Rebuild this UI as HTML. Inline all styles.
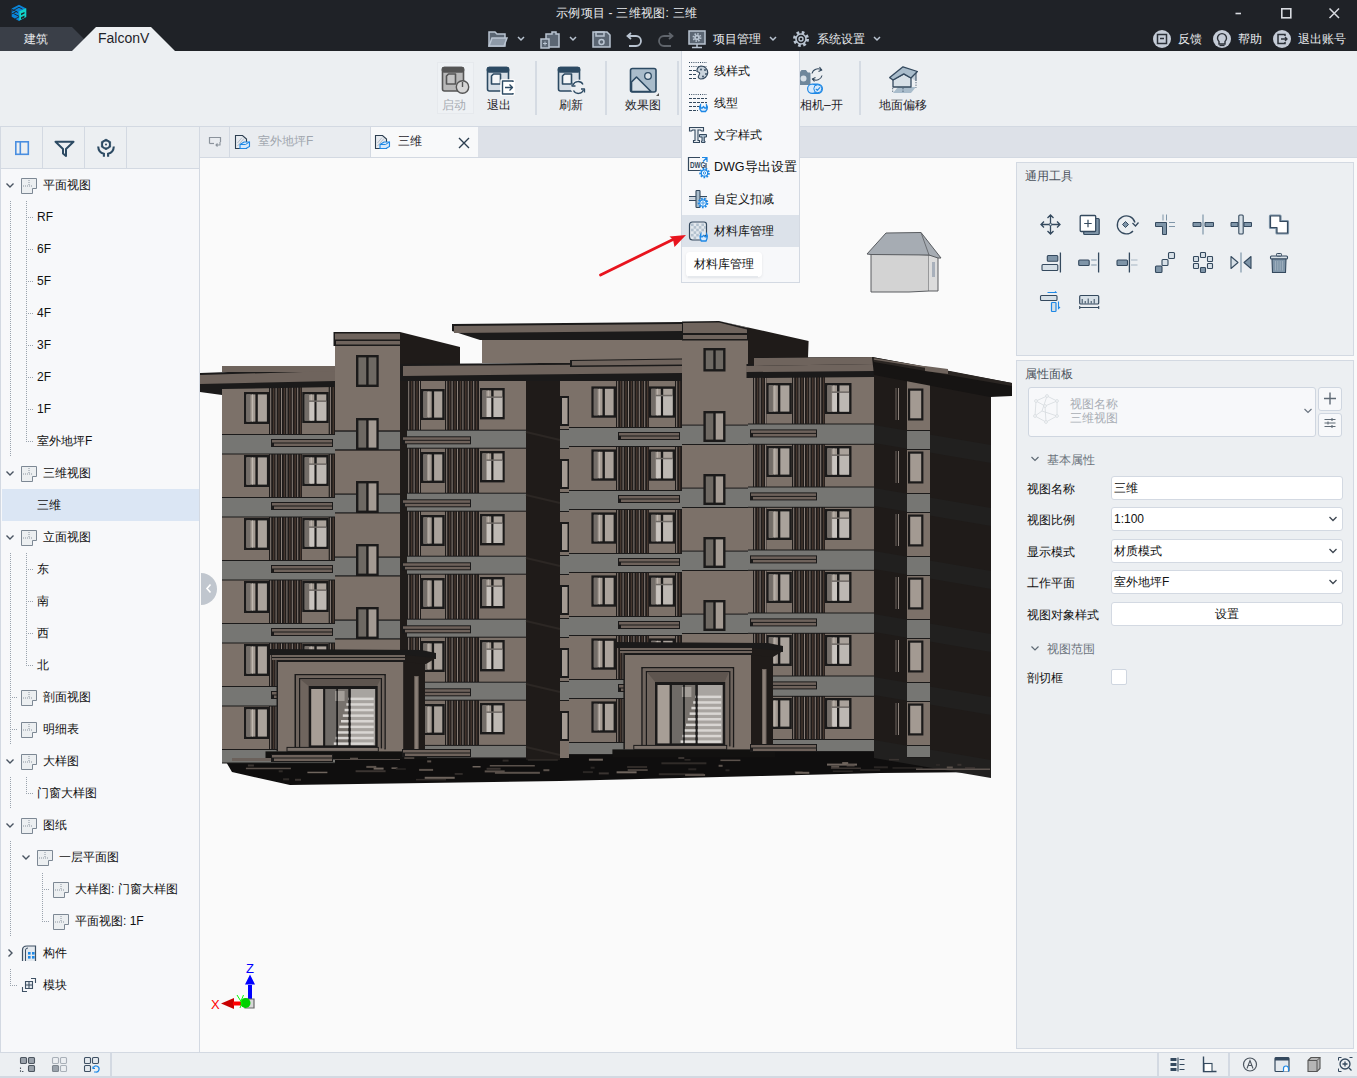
<!DOCTYPE html>
<html><head><meta charset="utf-8">
<style>
*{box-sizing:border-box;margin:0;padding:0}
html,body{width:1357px;height:1078px;overflow:hidden;background:#fafafa;font-family:"Liberation Sans",sans-serif;font-size:12px;color:#111}
.a{position:absolute}
#title{left:0;top:0;width:1357px;height:51px;background:#1f2227}
.wt{color:#e8eaed;white-space:nowrap}
#ribbon{left:0;top:51px;width:1357px;height:75px;background:#eceff2}
.rb{position:absolute;text-align:center;white-space:nowrap;color:#1f2329}
.sep{position:absolute;top:10px;width:2px;height:54px;background:#d5dbe3}
#left{left:0;top:126px;width:200px;height:927px;background:#f7f8fa;border:1px solid #d3d9e2;border-right:1px solid #d3d9e2}
#lhead{left:0;top:0;width:198px;height:42px;background:#eceff2;border-bottom:1px solid #d3d9e2}
.tr{position:absolute;height:32px;line-height:32px;white-space:nowrap}
#tabs{left:200px;top:126px;width:1157px;height:31px;background:#dfe3ea}
#view{left:200px;top:158px;width:1157px;height:894px;background:#fafafa}
#status{left:0;top:1052px;width:1357px;height:26px;background:#eceff2;border-top:1px solid #d3d9e2}
.panel{position:absolute;background:#eceff2;border:1px solid #d3d9e2}
.lbl{position:absolute;white-space:nowrap}
.inp{position:absolute;left:1111px;width:232px;height:24px;background:#fff;border:1px solid #d3d9e2;border-radius:3px;padding-left:2px;line-height:22px}
</style></head><body>
<!-- TITLE BAR -->
<div id="title" class="a">
<svg class="a" style="left:0;top:0" width="30" height="24">
<path d="M19 4.7 L26.2 8.6 V16.8 L19 20.9 L11.7 16.8 V8.6Z" fill="#0a84d8"/>
<path d="M11.7 11.3 L19 7.3 L22.5 9.2 M11.7 14 L17 11.2 M15 19 L19.5 16.6 M11.7 9.2 L18 12.5 M13.5 13.5 L19 16.3" stroke="#1f2227" stroke-width="0.9" fill="none"/>
<path d="M19.3 11.2 L26.2 8.2 V16.9 L19.3 20.6Z" fill="#12d3c8"/>
<path d="M21 13.6 L24.5 11.9 V13.6 L21 15.3Z M21 17.2 L24.5 15.4 V17.4 L21 19.3Z" fill="#1f2227"/>
</svg>
<div class="a wt" style="left:556px;top:5px;font-size:12px;letter-spacing:0.25px">示例项目 - 三维视图: 三维</div>
<svg class="a" style="left:1230px;top:4px" width="120" height="20">
<path d="M5.5 9.5 H11" stroke="#d8dbe0" stroke-width="1.6"/>
<rect x="51.8" y="4.8" width="9" height="9" stroke="#d8dbe0" stroke-width="1.6" fill="none"/>
<path d="M99.5 4.5 L109 14 M109 4.5 L99.5 14" stroke="#d8dbe0" stroke-width="1.5"/>
</svg>
<!-- tabs -->
<svg class="a" style="left:0;top:27px" width="200" height="24">
<path d="M0 0 H72 L96 24 H0Z" fill="#3a3f48"/>
<path d="M72 24 L96 0 H151 L175 24Z" fill="#eceff2"/>
</svg>
<div class="a" style="left:24px;top:31px;color:#e6e8eb;font-size:12px">建筑</div>
<div class="a" style="left:98px;top:30px;color:#1f2329;font-size:14px">FalconV</div>
<!-- quick toolbar -->
<svg class="a" style="left:480px;top:27px" width="420" height="24" fill="none" stroke="#b9c4d1" stroke-width="1.5">
<path d="M9 5 H15 L17 7 H25 V19 H9Z" fill="#5b6673" stroke="#b9c4d1"/>
<path d="M9 19 L12 11 H27 L24 19Z" fill="#8e9aa8" stroke="#b9c4d1"/>
<path d="M38 10 L41 13 L44 10" />
<path d="M66 7 H72 V5 H76 V7 H79 V20 H66Z" fill="#5b6673"/>
<rect x="61" y="12" width="8" height="9" fill="#5b6673"/>
<path d="M63 16.5 H67 M65 14.5 V18.5" stroke-width="1"/>
<path d="M90 10 L93 13 L96 10" />
<path d="M113 5 H127 L130 8 V20 H113Z" fill="#5b6673"/>
<rect x="116" y="5" width="8" height="4"/>
<circle cx="121.5" cy="15" r="2.5"/>
<path d="M148 9 H156 A5 5 0 0 1 156 19 H149" stroke-width="1.8"/>
<path d="M151 6 L147.5 9 L151 12" stroke-width="1.8"/>
<path d="M192 9 H184 A5 5 0 0 0 184 19 H191" stroke="#5f646b" stroke-width="1.8"/>
<path d="M189 6 L192.5 9 L189 12" stroke="#5f646b" stroke-width="1.8"/>
<rect x="209" y="4" width="16" height="13" fill="#5b6673"/>
<circle cx="217" cy="10.5" r="3.6" fill="none" stroke="#b9c4d1" stroke-width="1.8" stroke-dasharray="1.5 1.3"/>
<circle cx="217" cy="10.5" r="2.8" fill="#b9c4d1" stroke="none"/>
<circle cx="217" cy="10.5" r="1.1" fill="#5b6673" stroke="none"/>
<path d="M217 17 V20 M212 20.5 H222"/>
<path d="M290 10 L293 13 L296 10" />
<circle cx="321" cy="12" r="6.5" fill="none" stroke-width="3" stroke-dasharray="2.6 2.5"/>
<circle cx="321" cy="12" r="5" fill="none" stroke-width="1.6"/>
<circle cx="321" cy="12" r="2" fill="none" stroke-width="1.4"/>
<path d="M394 10 L397 13 L400 10" />
</svg>
<div class="a wt" style="left:713px;top:31px">项目管理</div>
<div class="a wt" style="left:817px;top:31px">系统设置</div>
<!-- right -->
<svg class="a" style="left:1150px;top:27px" width="207" height="24">
<circle cx="12" cy="12" r="9" fill="#c5ccd7"/>
<rect x="7.5" y="7.5" width="9" height="9" fill="none" stroke="#2b3038" stroke-width="1.5"/>
<path d="M10 11.5 H14" stroke="#2b3038" stroke-width="1.5"/>
<circle cx="72" cy="12" r="9" fill="#c5ccd7"/>
<path d="M69 17 V14.5 A4.5 4.5 0 1 1 75 14.5 V17Z" fill="none" stroke="#2b3038" stroke-width="1.4"/>
<path d="M69.5 18.5 H74.5" stroke="#2b3038" stroke-width="1.2"/>
<circle cx="132" cy="12" r="9" fill="#c5ccd7"/>
<path d="M135 9 V7.5 H128 V16.5 H135 V15" fill="none" stroke="#2b3038" stroke-width="1.5"/>
<path d="M131 12 H137 M135 10 L137 12 L135 14" fill="none" stroke="#2b3038" stroke-width="1.3"/>
</svg>
<div class="a wt" style="left:1178px;top:31px">反馈</div>
<div class="a wt" style="left:1238px;top:31px">帮助</div>
<div class="a wt" style="left:1298px;top:31px">退出账号</div>
</div>
<!-- RIBBON -->
<div id="ribbon" class="a">
<div class="a" style="left:437px;top:11px;width:37px;height:52px;background:#eef1f4;border:1px solid #e6e9ed"></div>
<svg class="a" style="left:0;top:0" width="940" height="75">
<g stroke-width="1.6" stroke-linejoin="round">
<!-- qidong -->
<rect x="442.5" y="16.5" width="21" height="23.5" rx="2" fill="#b8b8b8" stroke="#555"/>
<rect x="442.5" y="16.5" width="21" height="4.5" rx="1.5" fill="#555" stroke="#555"/>
<path d="M446.5 25 L448.5 23 H455.5 V33 H446.5Z" fill="#c4c4c4" stroke="#555"/>
<circle cx="462.5" cy="36" r="6.2" fill="#d6d6d6" stroke="#555" stroke-width="1.4"/>
<path d="M462.5 31 V36" stroke="#555" stroke-width="1.4"/>
<!-- tuichu -->
<rect x="487.5" y="16.5" width="21" height="23.5" rx="2" fill="#d6dee6" stroke="#2c4a63"/>
<rect x="487.5" y="16.5" width="21" height="4.5" rx="1.5" fill="#2c4a63" stroke="#2c4a63"/>
<path d="M491.5 25 L493.5 23 H500.5 V33 H491.5Z" fill="#f4f6f8" stroke="#2c4a63"/>
<rect x="501.5" y="29.5" width="12" height="14" fill="#fff" stroke="#fff" stroke-width="2.5"/>
<path d="M513 31 V30 H502.5 V43 H513 V42" fill="none" stroke="#2c4a63" stroke-width="1.4"/>
<path d="M505 36.5 H512.5 M509.5 33.5 L512.5 36.5 L509.5 39.5" fill="none" stroke="#2c4a63" stroke-width="1.3"/>
<!-- shuaxin -->
<rect x="558.5" y="16.5" width="21" height="23.5" rx="2" fill="#d6dee6" stroke="#2c4a63"/>
<rect x="558.5" y="16.5" width="21" height="4.5" rx="1.5" fill="#2c4a63" stroke="#2c4a63"/>
<path d="M562.5 25 L564.5 23 H571.5 V33 H562.5Z" fill="#f4f6f8" stroke="#2c4a63"/>
<circle cx="578.3" cy="36.4" r="6.8" fill="#eceff2" stroke="#eceff2" stroke-width="2"/>
<path d="M573 34 A5.5 5.5 0 0 1 583 33.5 M583.5 39 A5.5 5.5 0 0 1 573.5 39.5" fill="none" stroke="#2c4a63" stroke-width="1.3"/>
<path d="M572 31.5 V35 H575.5 M584.5 41.5 V38 H581" fill="none" stroke="#2c4a63" stroke-width="1.3"/>
<!-- xiaoguotu -->
<rect x="630.5" y="17.5" width="25.5" height="23.5" rx="2" fill="#a9bccb" stroke="#2c4a63"/>
<path d="M631.5 31 L636.5 26 L651 40.5 H631.5Z" fill="#d7e0e7" stroke="#2c4a63"/>
<circle cx="648" cy="25" r="3.3" fill="#d7e0e7" stroke="#2c4a63" stroke-width="1.3"/>
<path d="M659 42 V45 H656Z" fill="#555" stroke="none"/>
<!-- camera -->
<path d="M797 22 H800 L801.5 19.5 H806 L807.5 22 H810 V33.5 H797Z" fill="#6f879b" stroke="#6f879b" stroke-width="1"/>
<circle cx="803.5" cy="27.5" r="3" fill="#d7e0e7"/>
<path d="M812 22.5 A6 6 0 0 1 821.5 19 M822 24.5 A6 6 0 0 1 812.5 28" fill="none" stroke="#34495e" stroke-width="1.1"/>
<path d="M819.5 16 L821.8 19 L818.5 20.5 M814.5 30.5 L812.3 28 L815.5 26.5" fill="none" stroke="#34495e" stroke-width="1.1"/>
<rect x="807" y="32.5" width="16" height="10.5" rx="5.25" fill="#1e88e5"/>
<circle cx="812.2" cy="37.75" r="4" fill="#d7e9fb"/>
<circle cx="817.8" cy="37.75" r="4" fill="#d7e9fb" stroke="#1e88e5" stroke-width="1"/>
<path d="M815.8 37.8 L817.3 39.3 L820 36.3" fill="none" stroke="#1e88e5" stroke-width="1.1"/>
<!-- dimian -->
<path d="M893 36.5 L911 36.5 L916 30.5 L898 30.5Z" fill="#a9bccb" stroke="none" transform="translate(0,5.5)"/>
<path d="M893 29 L903.8 23 L911 27 V36 H893Z" fill="#d7e0e7" stroke="#34495e" stroke-width="1.3"/>
<path d="M911 27 L916 21.5 V30" fill="#c4d0da" stroke="#34495e" stroke-width="1"/>
<path d="M889.7 26.6 L903 15.8 L917.4 20.5 L911 27 L903.8 22.9 L893 29Z" fill="#a9bccb" stroke="#34495e" stroke-width="1.3"/>
<path d="M892.7 37 V42 M903 37 V42 M916 31 V37" stroke="#34495e" stroke-width="0.8" stroke-dasharray="1.3 1.3"/>
</g>
</svg>
<div class="sep" style="left:534.5px"></div>
<div class="sep" style="left:605px"></div>
<div class="sep" style="left:677px"></div>
<div class="sep" style="left:859px"></div>
<div class="rb" style="left:442px;top:46px;color:#a6abb2">启动</div>
<div class="rb" style="left:487px;top:46px">退出</div>
<div class="rb" style="left:559px;top:46px">刷新</div>
<div class="rb" style="left:625px;top:46px">效果图</div>
<div class="rb" style="left:800px;top:46px">相机–开</div>
<div class="rb" style="left:879px;top:46px">地面偏移</div>
</div>
<!-- LEFT PANEL -->
<div class="a" style="left:0;top:126px;width:200px;height:927px;background:#f7f8fa;border:1px solid #d3d9e2"></div>
<div class="a" style="left:1px;top:127px;width:198px;height:42px;background:#eceff2;border-bottom:1px solid #d3d9e2"></div>
<div class="a" style="left:42px;top:127px;width:1px;height:42px;background:#d3d9e2"></div>
<div class="a" style="left:84px;top:127px;width:1px;height:42px;background:#d3d9e2"></div>
<div class="a" style="left:126px;top:127px;width:1px;height:42px;background:#d3d9e2"></div>
<svg class="a" style="left:0;top:127px" width="140" height="41">
<rect x="15.8" y="14.8" width="12.5" height="12.5" fill="none" stroke="#4a8ee0" stroke-width="1.6"/>
<path d="M20.3 15 V27" stroke="#4a8ee0" stroke-width="1.6"/>
<path d="M55.5 14.8 H73.5 L66 22 V29 L63 26.5 V22Z" fill="none" stroke="#2c4a63" stroke-width="2" stroke-linejoin="round"/>
<path d="M106.00 12.10 L110.59 14.75 L110.59 20.05 L106.00 22.70 L101.41 20.05 L101.41 14.75Z" fill="#2c4a63" stroke="#2c4a63" stroke-width="0.8" stroke-linejoin="round"/>
<circle cx="106" cy="17.400000000000006" r="3" fill="#eceff2"/>
<circle cx="106" cy="17.400000000000006" r="1" fill="#2c4a63"/>
<path d="M98.2 19.5 Q98.5 25.5 103.9 26.8 V29.8 M113.8 19.5 Q113.5 25.5 108.1 26.8 V29.8" fill="none" stroke="#2c4a63" stroke-width="2.1"/>
</svg>
<div class="a" style="left:0;top:0"><svg class="a" style="left:0;top:0" width="200" height="1052"><path d="M10.5 201 V233" stroke="#9aa3ad" stroke-width="1" stroke-dasharray="1 1"/><path d="M10.5 233 V265" stroke="#9aa3ad" stroke-width="1" stroke-dasharray="1 1"/><path d="M10.5 265 V297" stroke="#9aa3ad" stroke-width="1" stroke-dasharray="1 1"/><path d="M10.5 297 V329" stroke="#9aa3ad" stroke-width="1" stroke-dasharray="1 1"/><path d="M10.5 329 V361" stroke="#9aa3ad" stroke-width="1" stroke-dasharray="1 1"/><path d="M10.5 361 V393" stroke="#9aa3ad" stroke-width="1" stroke-dasharray="1 1"/><path d="M10.5 393 V425" stroke="#9aa3ad" stroke-width="1" stroke-dasharray="1 1"/><path d="M10.5 425 V457" stroke="#9aa3ad" stroke-width="1" stroke-dasharray="1 1"/><path d="M10.5 553 V585" stroke="#9aa3ad" stroke-width="1" stroke-dasharray="1 1"/><path d="M10.5 585 V617" stroke="#9aa3ad" stroke-width="1" stroke-dasharray="1 1"/><path d="M10.5 617 V649" stroke="#9aa3ad" stroke-width="1" stroke-dasharray="1 1"/><path d="M10.5 649 V681" stroke="#9aa3ad" stroke-width="1" stroke-dasharray="1 1"/><path d="M10.5 681 V713" stroke="#9aa3ad" stroke-width="1" stroke-dasharray="1 1"/><path d="M10 697.5 H18" stroke="#9aa3ad" stroke-width="1" stroke-dasharray="1 1"/><path d="M10.5 713 V745" stroke="#9aa3ad" stroke-width="1" stroke-dasharray="1 1"/><path d="M10 729.5 H18" stroke="#9aa3ad" stroke-width="1" stroke-dasharray="1 1"/><path d="M10.5 777 V809" stroke="#9aa3ad" stroke-width="1" stroke-dasharray="1 1"/><path d="M10.5 841 V873" stroke="#9aa3ad" stroke-width="1" stroke-dasharray="1 1"/><path d="M10.5 873 V905" stroke="#9aa3ad" stroke-width="1" stroke-dasharray="1 1"/><path d="M10.5 905 V937" stroke="#9aa3ad" stroke-width="1" stroke-dasharray="1 1"/><path d="M10.5 969 V985" stroke="#9aa3ad" stroke-width="1" stroke-dasharray="1 1"/><path d="M10 985.5 H18" stroke="#9aa3ad" stroke-width="1" stroke-dasharray="1 1"/><path d="M26.5 201 V233" stroke="#9aa3ad" stroke-width="1" stroke-dasharray="1 1"/><path d="M26 217.5 H34" stroke="#9aa3ad" stroke-width="1" stroke-dasharray="1 1"/><path d="M26.5 233 V265" stroke="#9aa3ad" stroke-width="1" stroke-dasharray="1 1"/><path d="M26 249.5 H34" stroke="#9aa3ad" stroke-width="1" stroke-dasharray="1 1"/><path d="M26.5 265 V297" stroke="#9aa3ad" stroke-width="1" stroke-dasharray="1 1"/><path d="M26 281.5 H34" stroke="#9aa3ad" stroke-width="1" stroke-dasharray="1 1"/><path d="M26.5 297 V329" stroke="#9aa3ad" stroke-width="1" stroke-dasharray="1 1"/><path d="M26 313.5 H34" stroke="#9aa3ad" stroke-width="1" stroke-dasharray="1 1"/><path d="M26.5 329 V361" stroke="#9aa3ad" stroke-width="1" stroke-dasharray="1 1"/><path d="M26 345.5 H34" stroke="#9aa3ad" stroke-width="1" stroke-dasharray="1 1"/><path d="M26.5 361 V393" stroke="#9aa3ad" stroke-width="1" stroke-dasharray="1 1"/><path d="M26 377.5 H34" stroke="#9aa3ad" stroke-width="1" stroke-dasharray="1 1"/><path d="M26.5 393 V425" stroke="#9aa3ad" stroke-width="1" stroke-dasharray="1 1"/><path d="M26 409.5 H34" stroke="#9aa3ad" stroke-width="1" stroke-dasharray="1 1"/><path d="M26.5 425 V441" stroke="#9aa3ad" stroke-width="1" stroke-dasharray="1 1"/><path d="M26 441.5 H34" stroke="#9aa3ad" stroke-width="1" stroke-dasharray="1 1"/><path d="M26.5 553 V585" stroke="#9aa3ad" stroke-width="1" stroke-dasharray="1 1"/><path d="M26 569.5 H34" stroke="#9aa3ad" stroke-width="1" stroke-dasharray="1 1"/><path d="M26.5 585 V617" stroke="#9aa3ad" stroke-width="1" stroke-dasharray="1 1"/><path d="M26 601.5 H34" stroke="#9aa3ad" stroke-width="1" stroke-dasharray="1 1"/><path d="M26.5 617 V649" stroke="#9aa3ad" stroke-width="1" stroke-dasharray="1 1"/><path d="M26 633.5 H34" stroke="#9aa3ad" stroke-width="1" stroke-dasharray="1 1"/><path d="M26.5 649 V665" stroke="#9aa3ad" stroke-width="1" stroke-dasharray="1 1"/><path d="M26 665.5 H34" stroke="#9aa3ad" stroke-width="1" stroke-dasharray="1 1"/><path d="M26.5 777 V793" stroke="#9aa3ad" stroke-width="1" stroke-dasharray="1 1"/><path d="M26 793.5 H34" stroke="#9aa3ad" stroke-width="1" stroke-dasharray="1 1"/><path d="M42.5 873 V905" stroke="#9aa3ad" stroke-width="1" stroke-dasharray="1 1"/><path d="M42 889.5 H50" stroke="#9aa3ad" stroke-width="1" stroke-dasharray="1 1"/><path d="M42.5 905 V921" stroke="#9aa3ad" stroke-width="1" stroke-dasharray="1 1"/><path d="M42 921.5 H50" stroke="#9aa3ad" stroke-width="1" stroke-dasharray="1 1"/><path d="M6.5 183.5 L10 187 L13.5 183.5" fill="none" stroke="#4a5562" stroke-width="1.4"/><path d="M21.5 178.5 H36.5 V188.5 H32.5 V193.5 H21.5Z" fill="#eceff1" stroke="#7d8894" stroke-width="1"/><path d="M23 186 H32 M29 180 V186" stroke="#8a949f" stroke-width="1" stroke-dasharray="1 1"/><path d="M6.5 471.5 L10 475 L13.5 471.5" fill="none" stroke="#4a5562" stroke-width="1.4"/><path d="M21.5 466.5 H36.5 V476.5 H32.5 V481.5 H21.5Z" fill="#eceff1" stroke="#7d8894" stroke-width="1"/><path d="M23 474 H32 M29 468 V474" stroke="#8a949f" stroke-width="1" stroke-dasharray="1 1"/><path d="M6.5 535.5 L10 539 L13.5 535.5" fill="none" stroke="#4a5562" stroke-width="1.4"/><path d="M21.5 530.5 H36.5 V540.5 H32.5 V545.5 H21.5Z" fill="#eceff1" stroke="#7d8894" stroke-width="1"/><path d="M23 538 H32 M29 532 V538" stroke="#8a949f" stroke-width="1" stroke-dasharray="1 1"/><path d="M21.5 690.5 H36.5 V700.5 H32.5 V705.5 H21.5Z" fill="#eceff1" stroke="#7d8894" stroke-width="1"/><path d="M23 698 H32 M29 692 V698" stroke="#8a949f" stroke-width="1" stroke-dasharray="1 1"/><path d="M21.5 722.5 H36.5 V732.5 H32.5 V737.5 H21.5Z" fill="#eceff1" stroke="#7d8894" stroke-width="1"/><path d="M23 730 H32 M29 724 V730" stroke="#8a949f" stroke-width="1" stroke-dasharray="1 1"/><path d="M6.5 759.5 L10 763 L13.5 759.5" fill="none" stroke="#4a5562" stroke-width="1.4"/><path d="M21.5 754.5 H36.5 V764.5 H32.5 V769.5 H21.5Z" fill="#eceff1" stroke="#7d8894" stroke-width="1"/><path d="M23 762 H32 M29 756 V762" stroke="#8a949f" stroke-width="1" stroke-dasharray="1 1"/><path d="M6.5 823.5 L10 827 L13.5 823.5" fill="none" stroke="#4a5562" stroke-width="1.4"/><path d="M21.5 818.5 H36.5 V828.5 H32.5 V833.5 H21.5Z" fill="#eceff1" stroke="#7d8894" stroke-width="1"/><path d="M23 826 H32 M29 820 V826" stroke="#8a949f" stroke-width="1" stroke-dasharray="1 1"/><path d="M22.5 855.5 L26 859 L29.5 855.5" fill="none" stroke="#4a5562" stroke-width="1.4"/><path d="M37.5 850.5 H52.5 V860.5 H48.5 V865.5 H37.5Z" fill="#eceff1" stroke="#7d8894" stroke-width="1"/><path d="M39 858 H48 M45 852 V858" stroke="#8a949f" stroke-width="1" stroke-dasharray="1 1"/><path d="M53.5 882.5 H68.5 V892.5 H64.5 V897.5 H53.5Z" fill="#eceff1" stroke="#7d8894" stroke-width="1"/><path d="M55 890 H64 M61 884 V890" stroke="#8a949f" stroke-width="1" stroke-dasharray="1 1"/><path d="M53.5 914.5 H68.5 V924.5 H64.5 V929.5 H53.5Z" fill="#eceff1" stroke="#7d8894" stroke-width="1"/><path d="M55 922 H64 M61 916 V922" stroke="#8a949f" stroke-width="1" stroke-dasharray="1 1"/><path d="M8.5 949.5 L12 953 L8.5 956.5" fill="none" stroke="#4a5562" stroke-width="1.4"/><path d="M22.5 961 V950 Q22.5 946 27 946 H35.5 V961" fill="#e4e9ee" stroke="#3f5164" stroke-width="1.2"/><path d="M25.5 961 V950 Q25.5 948 28 948" fill="none" stroke="#3f5164" stroke-width="1"/><rect x="28" y="952" width="2.6" height="2.6" fill="#1e88e5"/><rect x="28" y="956" width="2.6" height="2.6" fill="#1e88e5"/><rect x="32" y="952" width="2.6" height="2.6" fill="#1e88e5"/><rect x="32" y="956" width="2.6" height="2.6" fill="#1e88e5"/><path d="M25.5 981.5 H32.5 V988.5 H25.5Z M29 981.5 V988.5 M25.5 985 H32.5" fill="#e4e9ee" stroke="#3f5164" stroke-width="1.1"/><path d="M22.5 987 V991.5 H27 M31 978.5 H35.5 V983" fill="none" stroke="#3f5164" stroke-width="1.1"/></svg><div class="a" style="left:2px;top:489px;width:197px;height:32px;background:#dbe6f4"></div><div class="tr" style="left:43px;top:169px">平面视图</div><div class="tr" style="left:37px;top:201px">RF</div><div class="tr" style="left:37px;top:233px">6F</div><div class="tr" style="left:37px;top:265px">5F</div><div class="tr" style="left:37px;top:297px">4F</div><div class="tr" style="left:37px;top:329px">3F</div><div class="tr" style="left:37px;top:361px">2F</div><div class="tr" style="left:37px;top:393px">1F</div><div class="tr" style="left:37px;top:425px">室外地坪F</div><div class="tr" style="left:43px;top:457px">三维视图</div><div class="tr" style="left:37px;top:489px">三维</div><div class="tr" style="left:43px;top:521px">立面视图</div><div class="tr" style="left:37px;top:553px">东</div><div class="tr" style="left:37px;top:585px">南</div><div class="tr" style="left:37px;top:617px">西</div><div class="tr" style="left:37px;top:649px">北</div><div class="tr" style="left:43px;top:681px">剖面视图</div><div class="tr" style="left:43px;top:713px">明细表</div><div class="tr" style="left:43px;top:745px">大样图</div><div class="tr" style="left:37px;top:777px">门窗大样图</div><div class="tr" style="left:43px;top:809px">图纸</div><div class="tr" style="left:59px;top:841px">一层平面图</div><div class="tr" style="left:75px;top:873px">大样图: 门窗大样图</div><div class="tr" style="left:75px;top:905px">平面视图: 1F</div><div class="tr" style="left:43px;top:937px">构件</div><div class="tr" style="left:43px;top:969px">模块</div></div>
<!-- TABS -->
<div class="a" style="left:200px;top:126px;width:1157px;height:31px;background:#dde1e8;border-top:1px solid #d3d9e2"></div>
<div class="a" style="left:200px;top:127px;width:30px;height:30px;background:#e9ecf0;border-right:1px solid #d3d9e2"></div>
<div class="a" style="left:230px;top:127px;width:141px;height:30px;background:#e9ecf0;border-right:1px solid #d3d9e2"></div>
<div class="a" style="left:371px;top:127px;width:107px;height:30px;background:#f8f9fa"></div>
<div class="a" style="left:200px;top:157px;width:1157px;height:1px;background:#d3d9e2"></div>
<svg class="a" style="left:200px;top:126px" width="280" height="31">
<path d="M9.5 17.5 V11.5 H20.5 V16" fill="none" stroke="#8b939c" stroke-width="1.2"/>
<path d="M9.5 17.5 H14" stroke="#8b939c" stroke-width="1.2"/>
<path d="M20 16 V19 H16 M17.5 17.5 L16 19 L17.5 20.5" fill="none" stroke="#8b939c" stroke-width="1.1"/>
<g id="ti">
<path d="M35.5 9.5 H42.5 L46.5 13 V22.5 H35.5Z" fill="#e6eaef" stroke="#2c3e50" stroke-width="1.1"/>
<path d="M37.5 17 L42 11.5 M37.5 20 L44 12.5" stroke="#a9b4c0" stroke-width="0.8"/>
<path d="M40 18.5 L44 16 H49.5 V20.5 L46 22.5 H40Z" fill="#d7e9fb" stroke="#1e88e5" stroke-width="1.1"/>
<path d="M40 18.5 H45.5 L49.5 16" fill="none" stroke="#1e88e5" stroke-width="1"/>
</g>
<g transform="translate(140,0)">
<path d="M35.5 9.5 H42.5 L46.5 13 V22.5 H35.5Z" fill="#e6eaef" stroke="#2c3e50" stroke-width="1.1"/>
<path d="M37.5 17 L42 11.5 M37.5 20 L44 12.5" stroke="#a9b4c0" stroke-width="0.8"/>
<path d="M40 18.5 L44 16 H49.5 V20.5 L46 22.5 H40Z" fill="#d7e9fb" stroke="#1e88e5" stroke-width="1.1"/>
<path d="M40 18.5 H45.5 L49.5 16" fill="none" stroke="#1e88e5" stroke-width="1"/>
</g>
<path d="M259 12 L269 22 M269 12 L259 22" stroke="#2c3e50" stroke-width="1.4"/>
</svg>
<div class="a" style="left:258px;top:133px;color:#a0a6ae;white-space:nowrap">室外地坪F</div>
<div class="a" style="left:398px;top:133px;color:#1f2329">三维</div>

<!-- VIEWPORT -->
<div id="view" class="a"></div>
<!--BLD--><svg class="a" style="left:0;top:0" width="1016" height="800"><path d="M222.0 755.0 L232.0 772.0 L290.0 785.0 L560.0 781.0 L760.0 776.0 L880.0 773.0 L991.0 772.0 L991.0 740.0 L222.0 740.0Z" fill="#0f0e0e" /><rect x="222.0" y="387.0" width="113.0" height="376.0" fill="#7c7169" /><rect x="269.0" y="387.0" width="33.0" height="48.0" fill="#1e1b1a" /><rect x="270.2" y="387.0" width="1.0" height="48.0" fill="#8a7f78" /><rect x="272.9" y="387.0" width="1.4" height="48.0" fill="#45372f" /><rect x="275.6" y="387.0" width="1.0" height="48.0" fill="#8a7f78" /><rect x="278.3" y="387.0" width="1.4" height="48.0" fill="#45372f" /><rect x="281.0" y="387.0" width="1.0" height="48.0" fill="#8a7f78" /><rect x="283.7" y="387.0" width="1.4" height="48.0" fill="#45372f" /><rect x="286.4" y="387.0" width="1.0" height="48.0" fill="#8a7f78" /><rect x="289.1" y="387.0" width="1.4" height="48.0" fill="#45372f" /><rect x="291.8" y="387.0" width="1.0" height="48.0" fill="#8a7f78" /><rect x="294.5" y="387.0" width="1.4" height="48.0" fill="#45372f" /><rect x="297.2" y="387.0" width="1.0" height="48.0" fill="#8a7f78" /><rect x="299.9" y="387.0" width="1.4" height="48.0" fill="#45372f" /><rect x="328.7" y="387.0" width="6.3" height="48.0" fill="#1e1b1a" /><rect x="329.9" y="387.0" width="1.0" height="48.0" fill="#8a7f78" /><rect x="332.6" y="387.0" width="1.4" height="48.0" fill="#45372f" /><rect x="244.0" y="392.0" width="25.3" height="32.0" fill="#1b1a1a" /><rect x="246.4" y="394.4" width="9.0" height="27.2" fill="#a39a92" /><rect x="246.4" y="394.4" width="4.1" height="27.2" fill="#736d68" /><rect x="252.0" y="394.4" width="0.9" height="27.2" fill="#c2bbb4" /><rect x="257.8" y="394.4" width="9.1" height="27.2" fill="#aaa29b" /><rect x="302.3" y="392.0" width="26.4" height="31.0" fill="#1b1a1a" /><rect x="304.7" y="394.4" width="9.6" height="26.2" fill="#a39a92" /><rect x="304.7" y="394.4" width="4.3" height="26.2" fill="#736d68" /><rect x="310.7" y="394.4" width="1.0" height="26.2" fill="#c2bbb4" /><rect x="316.7" y="394.4" width="9.6" height="26.2" fill="#aaa29b" /><rect x="309.5" y="401.4" width="4.8" height="19.2" fill="#c9c4bf" /><rect x="316.7" y="401.4" width="9.6" height="19.2" fill="#bdb8b3" /><rect x="309.0" y="400.4" width="17.3" height="1.5" fill="#6f6a66" /><rect x="269.0" y="453.0" width="33.0" height="45.0" fill="#1e1b1a" /><rect x="270.2" y="453.0" width="1.0" height="45.0" fill="#8a7f78" /><rect x="272.9" y="453.0" width="1.4" height="45.0" fill="#45372f" /><rect x="275.6" y="453.0" width="1.0" height="45.0" fill="#8a7f78" /><rect x="278.3" y="453.0" width="1.4" height="45.0" fill="#45372f" /><rect x="281.0" y="453.0" width="1.0" height="45.0" fill="#8a7f78" /><rect x="283.7" y="453.0" width="1.4" height="45.0" fill="#45372f" /><rect x="286.4" y="453.0" width="1.0" height="45.0" fill="#8a7f78" /><rect x="289.1" y="453.0" width="1.4" height="45.0" fill="#45372f" /><rect x="291.8" y="453.0" width="1.0" height="45.0" fill="#8a7f78" /><rect x="294.5" y="453.0" width="1.4" height="45.0" fill="#45372f" /><rect x="297.2" y="453.0" width="1.0" height="45.0" fill="#8a7f78" /><rect x="299.9" y="453.0" width="1.4" height="45.0" fill="#45372f" /><rect x="328.7" y="453.0" width="6.3" height="45.0" fill="#1e1b1a" /><rect x="329.9" y="453.0" width="1.0" height="45.0" fill="#8a7f78" /><rect x="332.6" y="453.0" width="1.4" height="45.0" fill="#45372f" /><rect x="244.0" y="455.0" width="25.3" height="32.0" fill="#1b1a1a" /><rect x="246.4" y="457.4" width="9.0" height="27.2" fill="#a39a92" /><rect x="246.4" y="457.4" width="4.1" height="27.2" fill="#736d68" /><rect x="252.0" y="457.4" width="0.9" height="27.2" fill="#c2bbb4" /><rect x="257.8" y="457.4" width="9.1" height="27.2" fill="#aaa29b" /><rect x="302.3" y="455.0" width="26.4" height="31.0" fill="#1b1a1a" /><rect x="304.7" y="457.4" width="9.6" height="26.2" fill="#a39a92" /><rect x="304.7" y="457.4" width="4.3" height="26.2" fill="#736d68" /><rect x="310.7" y="457.4" width="1.0" height="26.2" fill="#c2bbb4" /><rect x="316.7" y="457.4" width="9.6" height="26.2" fill="#aaa29b" /><rect x="309.5" y="464.4" width="4.8" height="19.2" fill="#c9c4bf" /><rect x="316.7" y="464.4" width="9.6" height="19.2" fill="#bdb8b3" /><rect x="309.0" y="463.4" width="17.3" height="1.5" fill="#6f6a66" /><rect x="269.0" y="516.0" width="33.0" height="45.0" fill="#1e1b1a" /><rect x="270.2" y="516.0" width="1.0" height="45.0" fill="#8a7f78" /><rect x="272.9" y="516.0" width="1.4" height="45.0" fill="#45372f" /><rect x="275.6" y="516.0" width="1.0" height="45.0" fill="#8a7f78" /><rect x="278.3" y="516.0" width="1.4" height="45.0" fill="#45372f" /><rect x="281.0" y="516.0" width="1.0" height="45.0" fill="#8a7f78" /><rect x="283.7" y="516.0" width="1.4" height="45.0" fill="#45372f" /><rect x="286.4" y="516.0" width="1.0" height="45.0" fill="#8a7f78" /><rect x="289.1" y="516.0" width="1.4" height="45.0" fill="#45372f" /><rect x="291.8" y="516.0" width="1.0" height="45.0" fill="#8a7f78" /><rect x="294.5" y="516.0" width="1.4" height="45.0" fill="#45372f" /><rect x="297.2" y="516.0" width="1.0" height="45.0" fill="#8a7f78" /><rect x="299.9" y="516.0" width="1.4" height="45.0" fill="#45372f" /><rect x="328.7" y="516.0" width="6.3" height="45.0" fill="#1e1b1a" /><rect x="329.9" y="516.0" width="1.0" height="45.0" fill="#8a7f78" /><rect x="332.6" y="516.0" width="1.4" height="45.0" fill="#45372f" /><rect x="244.0" y="518.0" width="25.3" height="32.0" fill="#1b1a1a" /><rect x="246.4" y="520.4" width="9.0" height="27.2" fill="#a39a92" /><rect x="246.4" y="520.4" width="4.1" height="27.2" fill="#736d68" /><rect x="252.0" y="520.4" width="0.9" height="27.2" fill="#c2bbb4" /><rect x="257.8" y="520.4" width="9.1" height="27.2" fill="#aaa29b" /><rect x="302.3" y="518.0" width="26.4" height="31.0" fill="#1b1a1a" /><rect x="304.7" y="520.4" width="9.6" height="26.2" fill="#a39a92" /><rect x="304.7" y="520.4" width="4.3" height="26.2" fill="#736d68" /><rect x="310.7" y="520.4" width="1.0" height="26.2" fill="#c2bbb4" /><rect x="316.7" y="520.4" width="9.6" height="26.2" fill="#aaa29b" /><rect x="309.5" y="527.4" width="4.8" height="19.2" fill="#c9c4bf" /><rect x="316.7" y="527.4" width="9.6" height="19.2" fill="#bdb8b3" /><rect x="309.0" y="526.4" width="17.3" height="1.5" fill="#6f6a66" /><rect x="269.0" y="579.0" width="33.0" height="45.0" fill="#1e1b1a" /><rect x="270.2" y="579.0" width="1.0" height="45.0" fill="#8a7f78" /><rect x="272.9" y="579.0" width="1.4" height="45.0" fill="#45372f" /><rect x="275.6" y="579.0" width="1.0" height="45.0" fill="#8a7f78" /><rect x="278.3" y="579.0" width="1.4" height="45.0" fill="#45372f" /><rect x="281.0" y="579.0" width="1.0" height="45.0" fill="#8a7f78" /><rect x="283.7" y="579.0" width="1.4" height="45.0" fill="#45372f" /><rect x="286.4" y="579.0" width="1.0" height="45.0" fill="#8a7f78" /><rect x="289.1" y="579.0" width="1.4" height="45.0" fill="#45372f" /><rect x="291.8" y="579.0" width="1.0" height="45.0" fill="#8a7f78" /><rect x="294.5" y="579.0" width="1.4" height="45.0" fill="#45372f" /><rect x="297.2" y="579.0" width="1.0" height="45.0" fill="#8a7f78" /><rect x="299.9" y="579.0" width="1.4" height="45.0" fill="#45372f" /><rect x="328.7" y="579.0" width="6.3" height="45.0" fill="#1e1b1a" /><rect x="329.9" y="579.0" width="1.0" height="45.0" fill="#8a7f78" /><rect x="332.6" y="579.0" width="1.4" height="45.0" fill="#45372f" /><rect x="244.0" y="581.0" width="25.3" height="32.0" fill="#1b1a1a" /><rect x="246.4" y="583.4" width="9.0" height="27.2" fill="#a39a92" /><rect x="246.4" y="583.4" width="4.1" height="27.2" fill="#736d68" /><rect x="252.0" y="583.4" width="0.9" height="27.2" fill="#c2bbb4" /><rect x="257.8" y="583.4" width="9.1" height="27.2" fill="#aaa29b" /><rect x="302.3" y="581.0" width="26.4" height="31.0" fill="#1b1a1a" /><rect x="304.7" y="583.4" width="9.6" height="26.2" fill="#a39a92" /><rect x="304.7" y="583.4" width="4.3" height="26.2" fill="#736d68" /><rect x="310.7" y="583.4" width="1.0" height="26.2" fill="#c2bbb4" /><rect x="316.7" y="583.4" width="9.6" height="26.2" fill="#aaa29b" /><rect x="309.5" y="590.4" width="4.8" height="19.2" fill="#c9c4bf" /><rect x="316.7" y="590.4" width="9.6" height="19.2" fill="#bdb8b3" /><rect x="309.0" y="589.4" width="17.3" height="1.5" fill="#6f6a66" /><rect x="269.0" y="642.0" width="33.0" height="45.0" fill="#1e1b1a" /><rect x="270.2" y="642.0" width="1.0" height="45.0" fill="#8a7f78" /><rect x="272.9" y="642.0" width="1.4" height="45.0" fill="#45372f" /><rect x="275.6" y="642.0" width="1.0" height="45.0" fill="#8a7f78" /><rect x="278.3" y="642.0" width="1.4" height="45.0" fill="#45372f" /><rect x="281.0" y="642.0" width="1.0" height="45.0" fill="#8a7f78" /><rect x="283.7" y="642.0" width="1.4" height="45.0" fill="#45372f" /><rect x="286.4" y="642.0" width="1.0" height="45.0" fill="#8a7f78" /><rect x="289.1" y="642.0" width="1.4" height="45.0" fill="#45372f" /><rect x="291.8" y="642.0" width="1.0" height="45.0" fill="#8a7f78" /><rect x="294.5" y="642.0" width="1.4" height="45.0" fill="#45372f" /><rect x="297.2" y="642.0" width="1.0" height="45.0" fill="#8a7f78" /><rect x="299.9" y="642.0" width="1.4" height="45.0" fill="#45372f" /><rect x="328.7" y="642.0" width="6.3" height="45.0" fill="#1e1b1a" /><rect x="329.9" y="642.0" width="1.0" height="45.0" fill="#8a7f78" /><rect x="332.6" y="642.0" width="1.4" height="45.0" fill="#45372f" /><rect x="244.0" y="644.0" width="25.3" height="32.0" fill="#1b1a1a" /><rect x="246.4" y="646.4" width="9.0" height="27.2" fill="#a39a92" /><rect x="246.4" y="646.4" width="4.1" height="27.2" fill="#736d68" /><rect x="252.0" y="646.4" width="0.9" height="27.2" fill="#c2bbb4" /><rect x="257.8" y="646.4" width="9.1" height="27.2" fill="#aaa29b" /><rect x="302.3" y="644.0" width="26.4" height="31.0" fill="#1b1a1a" /><rect x="304.7" y="646.4" width="9.6" height="26.2" fill="#a39a92" /><rect x="304.7" y="646.4" width="4.3" height="26.2" fill="#736d68" /><rect x="310.7" y="646.4" width="1.0" height="26.2" fill="#c2bbb4" /><rect x="316.7" y="646.4" width="9.6" height="26.2" fill="#aaa29b" /><rect x="309.5" y="653.4" width="4.8" height="19.2" fill="#c9c4bf" /><rect x="316.7" y="653.4" width="9.6" height="19.2" fill="#bdb8b3" /><rect x="309.0" y="652.4" width="17.3" height="1.5" fill="#6f6a66" /><rect x="269.0" y="705.0" width="33.0" height="45.0" fill="#1e1b1a" /><rect x="270.2" y="705.0" width="1.0" height="45.0" fill="#8a7f78" /><rect x="272.9" y="705.0" width="1.4" height="45.0" fill="#45372f" /><rect x="275.6" y="705.0" width="1.0" height="45.0" fill="#8a7f78" /><rect x="278.3" y="705.0" width="1.4" height="45.0" fill="#45372f" /><rect x="281.0" y="705.0" width="1.0" height="45.0" fill="#8a7f78" /><rect x="283.7" y="705.0" width="1.4" height="45.0" fill="#45372f" /><rect x="286.4" y="705.0" width="1.0" height="45.0" fill="#8a7f78" /><rect x="289.1" y="705.0" width="1.4" height="45.0" fill="#45372f" /><rect x="291.8" y="705.0" width="1.0" height="45.0" fill="#8a7f78" /><rect x="294.5" y="705.0" width="1.4" height="45.0" fill="#45372f" /><rect x="297.2" y="705.0" width="1.0" height="45.0" fill="#8a7f78" /><rect x="299.9" y="705.0" width="1.4" height="45.0" fill="#45372f" /><rect x="328.7" y="705.0" width="6.3" height="45.0" fill="#1e1b1a" /><rect x="329.9" y="705.0" width="1.0" height="45.0" fill="#8a7f78" /><rect x="332.6" y="705.0" width="1.4" height="45.0" fill="#45372f" /><rect x="244.0" y="707.0" width="25.3" height="32.0" fill="#1b1a1a" /><rect x="246.4" y="709.4" width="9.0" height="27.2" fill="#a39a92" /><rect x="246.4" y="709.4" width="4.1" height="27.2" fill="#736d68" /><rect x="252.0" y="709.4" width="0.9" height="27.2" fill="#c2bbb4" /><rect x="257.8" y="709.4" width="9.1" height="27.2" fill="#aaa29b" /><rect x="302.3" y="707.0" width="26.4" height="31.0" fill="#1b1a1a" /><rect x="304.7" y="709.4" width="9.6" height="26.2" fill="#a39a92" /><rect x="304.7" y="709.4" width="4.3" height="26.2" fill="#736d68" /><rect x="310.7" y="709.4" width="1.0" height="26.2" fill="#c2bbb4" /><rect x="316.7" y="709.4" width="9.6" height="26.2" fill="#aaa29b" /><rect x="309.5" y="716.4" width="4.8" height="19.2" fill="#c9c4bf" /><rect x="316.7" y="716.4" width="9.6" height="19.2" fill="#bdb8b3" /><rect x="309.0" y="715.4" width="17.3" height="1.5" fill="#6f6a66" /><rect x="222.0" y="434.0" width="113.0" height="20.5" fill="#1b1a1a" /><rect x="222.0" y="435.0" width="113.0" height="18.5" fill="#767673" /><rect x="271.0" y="439.0" width="62.0" height="8.0" fill="#1b1a1a" /><rect x="272.0" y="440.0" width="60.0" height="2.5" fill="#6e625b" /><rect x="274.0" y="443.5" width="58.0" height="2.5" fill="#6e625b" /><rect x="222.0" y="497.0" width="113.0" height="20.5" fill="#1b1a1a" /><rect x="222.0" y="498.0" width="113.0" height="18.5" fill="#767673" /><rect x="271.0" y="502.0" width="62.0" height="8.0" fill="#1b1a1a" /><rect x="272.0" y="503.0" width="60.0" height="2.5" fill="#6e625b" /><rect x="274.0" y="506.5" width="58.0" height="2.5" fill="#6e625b" /><rect x="222.0" y="560.0" width="113.0" height="20.5" fill="#1b1a1a" /><rect x="222.0" y="561.0" width="113.0" height="18.5" fill="#767673" /><rect x="271.0" y="565.0" width="62.0" height="8.0" fill="#1b1a1a" /><rect x="272.0" y="566.0" width="60.0" height="2.5" fill="#6e625b" /><rect x="274.0" y="569.5" width="58.0" height="2.5" fill="#6e625b" /><rect x="222.0" y="623.0" width="113.0" height="20.5" fill="#1b1a1a" /><rect x="222.0" y="624.0" width="113.0" height="18.5" fill="#767673" /><rect x="271.0" y="628.0" width="62.0" height="8.0" fill="#1b1a1a" /><rect x="272.0" y="629.0" width="60.0" height="2.5" fill="#6e625b" /><rect x="274.0" y="632.5" width="58.0" height="2.5" fill="#6e625b" /><rect x="222.0" y="686.0" width="113.0" height="20.5" fill="#1b1a1a" /><rect x="222.0" y="687.0" width="113.0" height="18.5" fill="#767673" /><rect x="271.0" y="691.0" width="62.0" height="8.0" fill="#1b1a1a" /><rect x="272.0" y="692.0" width="60.0" height="2.5" fill="#6e625b" /><rect x="274.0" y="695.5" width="58.0" height="2.5" fill="#6e625b" /><rect x="222.0" y="749.0" width="113.0" height="14.5" fill="#1b1a1a" /><rect x="222.0" y="750.0" width="113.0" height="12.5" fill="#767673" /><path d="M200.0 373.0 L335.0 368.0 L335.0 387.0 L222.0 389.0 L222.0 395.0 L200.0 392.0Z" fill="#1b1a1a" /><rect x="222.0" y="366.0" width="113.0" height="6.0" fill="#6f645d" /><path d="M200.0 375.0 L335.0 371.0 L335.0 381.0 L200.0 384.0Z" fill="#6f645d" /><rect x="335.0" y="345.0" width="65.0" height="415.0" fill="#7c7169" /><rect x="335.0" y="430.7" width="65.0" height="19.6" fill="#1b1a1a" /><rect x="335.0" y="431.7" width="65.0" height="17.6" fill="#767673" /><rect x="335.0" y="430.7" width="65.0" height="19.6" fill="#1b1a1a" /><rect x="335.0" y="431.7" width="65.0" height="17.6" fill="#767673" /><rect x="335.0" y="493.7" width="65.0" height="19.6" fill="#1b1a1a" /><rect x="335.0" y="494.7" width="65.0" height="17.6" fill="#767673" /><rect x="335.0" y="556.7" width="65.0" height="19.6" fill="#1b1a1a" /><rect x="335.0" y="557.7" width="65.0" height="17.6" fill="#767673" /><rect x="335.0" y="619.7" width="65.0" height="19.6" fill="#1b1a1a" /><rect x="335.0" y="620.7" width="65.0" height="17.6" fill="#767673" /><rect x="335.0" y="430.7" width="65.0" height="19.6" fill="#1b1a1a" /><rect x="335.0" y="431.7" width="65.0" height="17.6" fill="#767673" /><rect x="335.0" y="493.7" width="65.0" height="19.6" fill="#1b1a1a" /><rect x="335.0" y="494.7" width="65.0" height="17.6" fill="#767673" /><rect x="335.0" y="556.7" width="65.0" height="19.6" fill="#1b1a1a" /><rect x="335.0" y="557.7" width="65.0" height="17.6" fill="#767673" /><rect x="335.0" y="619.7" width="65.0" height="19.6" fill="#1b1a1a" /><rect x="335.0" y="620.7" width="65.0" height="17.6" fill="#767673" /><rect x="335.0" y="682.7" width="65.0" height="19.6" fill="#1b1a1a" /><rect x="335.0" y="683.7" width="65.0" height="17.6" fill="#767673" /><rect x="356.0" y="355.0" width="22.7" height="32.0" fill="#1b1a1a" /><rect x="358.4" y="357.4" width="7.8" height="27.2" fill="#6e6963" /><rect x="368.6" y="357.4" width="7.8" height="27.2" fill="#6e6963" /><rect x="356.0" y="418.0" width="22.7" height="32.0" fill="#1b1a1a" /><rect x="358.4" y="420.4" width="7.8" height="27.2" fill="#6e6963" /><rect x="368.6" y="420.4" width="7.8" height="27.2" fill="#a39a92" /><rect x="356.0" y="481.0" width="22.7" height="32.0" fill="#1b1a1a" /><rect x="358.4" y="483.4" width="7.8" height="27.2" fill="#6e6963" /><rect x="368.6" y="483.4" width="7.8" height="27.2" fill="#a39a92" /><rect x="356.0" y="544.0" width="22.7" height="32.0" fill="#1b1a1a" /><rect x="358.4" y="546.4" width="7.8" height="27.2" fill="#6e6963" /><rect x="368.6" y="546.4" width="7.8" height="27.2" fill="#a39a92" /><rect x="356.0" y="607.0" width="22.7" height="32.0" fill="#1b1a1a" /><rect x="358.4" y="609.4" width="7.8" height="27.2" fill="#6e6963" /><rect x="368.6" y="609.4" width="7.8" height="27.2" fill="#a39a92" /><rect x="356.0" y="670.0" width="22.7" height="32.0" fill="#1b1a1a" /><rect x="358.4" y="672.4" width="7.8" height="27.2" fill="#6e6963" /><rect x="368.6" y="672.4" width="7.8" height="27.2" fill="#a39a92" /><rect x="333.5" y="332.0" width="66.5" height="14.0" fill="#1b1a1a" /><rect x="335.0" y="333.5" width="65.0" height="6.0" fill="#6f645d" /><rect x="336.0" y="341.0" width="64.0" height="3.5" fill="#6f645d" /><path d="M400.0 332.0 L460.0 347.0 L460.0 365.0 L400.0 365.0Z" fill="#1f1b19" /><rect x="400.0" y="381.0" width="126.0" height="377.0" fill="#7c7169" /><rect x="400.0" y="381.0" width="7.0" height="377.0" fill="#1f1b19" /><rect x="407.0" y="381.0" width="14.0" height="49.7" fill="#1e1b1a" /><rect x="408.2" y="381.0" width="1.0" height="49.7" fill="#8a7f78" /><rect x="410.9" y="381.0" width="1.4" height="49.7" fill="#45372f" /><rect x="413.6" y="381.0" width="1.0" height="49.7" fill="#8a7f78" /><rect x="416.3" y="381.0" width="1.4" height="49.7" fill="#45372f" /><rect x="419.0" y="381.0" width="1.0" height="49.7" fill="#8a7f78" /><rect x="445.0" y="381.0" width="34.0" height="49.7" fill="#1e1b1a" /><rect x="446.2" y="381.0" width="1.0" height="49.7" fill="#8a7f78" /><rect x="448.9" y="381.0" width="1.4" height="49.7" fill="#45372f" /><rect x="451.6" y="381.0" width="1.0" height="49.7" fill="#8a7f78" /><rect x="454.3" y="381.0" width="1.4" height="49.7" fill="#45372f" /><rect x="457.0" y="381.0" width="1.0" height="49.7" fill="#8a7f78" /><rect x="459.7" y="381.0" width="1.4" height="49.7" fill="#45372f" /><rect x="462.4" y="381.0" width="1.0" height="49.7" fill="#8a7f78" /><rect x="465.1" y="381.0" width="1.4" height="49.7" fill="#45372f" /><rect x="467.8" y="381.0" width="1.0" height="49.7" fill="#8a7f78" /><rect x="470.5" y="381.0" width="1.4" height="49.7" fill="#45372f" /><rect x="473.2" y="381.0" width="1.0" height="49.7" fill="#8a7f78" /><rect x="475.9" y="381.0" width="1.4" height="49.7" fill="#45372f" /><rect x="421.0" y="389.0" width="23.7" height="31.0" fill="#1b1a1a" /><rect x="423.4" y="391.4" width="8.3" height="26.2" fill="#a39a92" /><rect x="423.4" y="391.4" width="3.7" height="26.2" fill="#736d68" /><rect x="428.5" y="391.4" width="0.8" height="26.2" fill="#c2bbb4" /><rect x="434.1" y="391.4" width="8.2" height="26.2" fill="#aaa29b" /><rect x="480.0" y="388.0" width="24.7" height="31.4" fill="#1b1a1a" /><rect x="482.4" y="390.4" width="8.8" height="26.6" fill="#a39a92" /><rect x="482.4" y="390.4" width="3.9" height="26.6" fill="#736d68" /><rect x="487.8" y="390.4" width="0.9" height="26.6" fill="#c2bbb4" /><rect x="493.6" y="390.4" width="8.8" height="26.6" fill="#aaa29b" /><rect x="486.8" y="397.4" width="4.4" height="19.6" fill="#c9c4bf" /><rect x="493.6" y="397.4" width="8.8" height="19.6" fill="#bdb8b3" /><rect x="486.3" y="396.4" width="16.0" height="1.5" fill="#6f6a66" /><rect x="407.0" y="447.8" width="14.0" height="45.9" fill="#1e1b1a" /><rect x="408.2" y="447.8" width="1.0" height="45.9" fill="#8a7f78" /><rect x="410.9" y="447.8" width="1.4" height="45.9" fill="#45372f" /><rect x="413.6" y="447.8" width="1.0" height="45.9" fill="#8a7f78" /><rect x="416.3" y="447.8" width="1.4" height="45.9" fill="#45372f" /><rect x="419.0" y="447.8" width="1.0" height="45.9" fill="#8a7f78" /><rect x="445.0" y="447.8" width="34.0" height="45.9" fill="#1e1b1a" /><rect x="446.2" y="447.8" width="1.0" height="45.9" fill="#8a7f78" /><rect x="448.9" y="447.8" width="1.4" height="45.9" fill="#45372f" /><rect x="451.6" y="447.8" width="1.0" height="45.9" fill="#8a7f78" /><rect x="454.3" y="447.8" width="1.4" height="45.9" fill="#45372f" /><rect x="457.0" y="447.8" width="1.0" height="45.9" fill="#8a7f78" /><rect x="459.7" y="447.8" width="1.4" height="45.9" fill="#45372f" /><rect x="462.4" y="447.8" width="1.0" height="45.9" fill="#8a7f78" /><rect x="465.1" y="447.8" width="1.4" height="45.9" fill="#45372f" /><rect x="467.8" y="447.8" width="1.0" height="45.9" fill="#8a7f78" /><rect x="470.5" y="447.8" width="1.4" height="45.9" fill="#45372f" /><rect x="473.2" y="447.8" width="1.0" height="45.9" fill="#8a7f78" /><rect x="475.9" y="447.8" width="1.4" height="45.9" fill="#45372f" /><rect x="421.0" y="452.0" width="23.7" height="31.0" fill="#1b1a1a" /><rect x="423.4" y="454.4" width="8.3" height="26.2" fill="#a39a92" /><rect x="423.4" y="454.4" width="3.7" height="26.2" fill="#736d68" /><rect x="428.5" y="454.4" width="0.8" height="26.2" fill="#c2bbb4" /><rect x="434.1" y="454.4" width="8.2" height="26.2" fill="#aaa29b" /><rect x="480.0" y="451.0" width="24.7" height="31.4" fill="#1b1a1a" /><rect x="482.4" y="453.4" width="8.8" height="26.6" fill="#a39a92" /><rect x="482.4" y="453.4" width="3.9" height="26.6" fill="#736d68" /><rect x="487.8" y="453.4" width="0.9" height="26.6" fill="#c2bbb4" /><rect x="493.6" y="453.4" width="8.8" height="26.6" fill="#aaa29b" /><rect x="486.8" y="460.4" width="4.4" height="19.6" fill="#c9c4bf" /><rect x="493.6" y="460.4" width="8.8" height="19.6" fill="#bdb8b3" /><rect x="486.3" y="459.4" width="16.0" height="1.5" fill="#6f6a66" /><rect x="407.0" y="510.8" width="14.0" height="45.9" fill="#1e1b1a" /><rect x="408.2" y="510.8" width="1.0" height="45.9" fill="#8a7f78" /><rect x="410.9" y="510.8" width="1.4" height="45.9" fill="#45372f" /><rect x="413.6" y="510.8" width="1.0" height="45.9" fill="#8a7f78" /><rect x="416.3" y="510.8" width="1.4" height="45.9" fill="#45372f" /><rect x="419.0" y="510.8" width="1.0" height="45.9" fill="#8a7f78" /><rect x="445.0" y="510.8" width="34.0" height="45.9" fill="#1e1b1a" /><rect x="446.2" y="510.8" width="1.0" height="45.9" fill="#8a7f78" /><rect x="448.9" y="510.8" width="1.4" height="45.9" fill="#45372f" /><rect x="451.6" y="510.8" width="1.0" height="45.9" fill="#8a7f78" /><rect x="454.3" y="510.8" width="1.4" height="45.9" fill="#45372f" /><rect x="457.0" y="510.8" width="1.0" height="45.9" fill="#8a7f78" /><rect x="459.7" y="510.8" width="1.4" height="45.9" fill="#45372f" /><rect x="462.4" y="510.8" width="1.0" height="45.9" fill="#8a7f78" /><rect x="465.1" y="510.8" width="1.4" height="45.9" fill="#45372f" /><rect x="467.8" y="510.8" width="1.0" height="45.9" fill="#8a7f78" /><rect x="470.5" y="510.8" width="1.4" height="45.9" fill="#45372f" /><rect x="473.2" y="510.8" width="1.0" height="45.9" fill="#8a7f78" /><rect x="475.9" y="510.8" width="1.4" height="45.9" fill="#45372f" /><rect x="421.0" y="515.0" width="23.7" height="31.0" fill="#1b1a1a" /><rect x="423.4" y="517.4" width="8.3" height="26.2" fill="#a39a92" /><rect x="423.4" y="517.4" width="3.7" height="26.2" fill="#736d68" /><rect x="428.5" y="517.4" width="0.8" height="26.2" fill="#c2bbb4" /><rect x="434.1" y="517.4" width="8.2" height="26.2" fill="#aaa29b" /><rect x="480.0" y="514.0" width="24.7" height="31.4" fill="#1b1a1a" /><rect x="482.4" y="516.4" width="8.8" height="26.6" fill="#a39a92" /><rect x="482.4" y="516.4" width="3.9" height="26.6" fill="#736d68" /><rect x="487.8" y="516.4" width="0.9" height="26.6" fill="#c2bbb4" /><rect x="493.6" y="516.4" width="8.8" height="26.6" fill="#aaa29b" /><rect x="486.8" y="523.4" width="4.4" height="19.6" fill="#c9c4bf" /><rect x="493.6" y="523.4" width="8.8" height="19.6" fill="#bdb8b3" /><rect x="486.3" y="522.4" width="16.0" height="1.5" fill="#6f6a66" /><rect x="407.0" y="573.8" width="14.0" height="45.9" fill="#1e1b1a" /><rect x="408.2" y="573.8" width="1.0" height="45.9" fill="#8a7f78" /><rect x="410.9" y="573.8" width="1.4" height="45.9" fill="#45372f" /><rect x="413.6" y="573.8" width="1.0" height="45.9" fill="#8a7f78" /><rect x="416.3" y="573.8" width="1.4" height="45.9" fill="#45372f" /><rect x="419.0" y="573.8" width="1.0" height="45.9" fill="#8a7f78" /><rect x="445.0" y="573.8" width="34.0" height="45.9" fill="#1e1b1a" /><rect x="446.2" y="573.8" width="1.0" height="45.9" fill="#8a7f78" /><rect x="448.9" y="573.8" width="1.4" height="45.9" fill="#45372f" /><rect x="451.6" y="573.8" width="1.0" height="45.9" fill="#8a7f78" /><rect x="454.3" y="573.8" width="1.4" height="45.9" fill="#45372f" /><rect x="457.0" y="573.8" width="1.0" height="45.9" fill="#8a7f78" /><rect x="459.7" y="573.8" width="1.4" height="45.9" fill="#45372f" /><rect x="462.4" y="573.8" width="1.0" height="45.9" fill="#8a7f78" /><rect x="465.1" y="573.8" width="1.4" height="45.9" fill="#45372f" /><rect x="467.8" y="573.8" width="1.0" height="45.9" fill="#8a7f78" /><rect x="470.5" y="573.8" width="1.4" height="45.9" fill="#45372f" /><rect x="473.2" y="573.8" width="1.0" height="45.9" fill="#8a7f78" /><rect x="475.9" y="573.8" width="1.4" height="45.9" fill="#45372f" /><rect x="421.0" y="578.0" width="23.7" height="31.0" fill="#1b1a1a" /><rect x="423.4" y="580.4" width="8.3" height="26.2" fill="#a39a92" /><rect x="423.4" y="580.4" width="3.7" height="26.2" fill="#736d68" /><rect x="428.5" y="580.4" width="0.8" height="26.2" fill="#c2bbb4" /><rect x="434.1" y="580.4" width="8.2" height="26.2" fill="#aaa29b" /><rect x="480.0" y="577.0" width="24.7" height="31.4" fill="#1b1a1a" /><rect x="482.4" y="579.4" width="8.8" height="26.6" fill="#a39a92" /><rect x="482.4" y="579.4" width="3.9" height="26.6" fill="#736d68" /><rect x="487.8" y="579.4" width="0.9" height="26.6" fill="#c2bbb4" /><rect x="493.6" y="579.4" width="8.8" height="26.6" fill="#aaa29b" /><rect x="486.8" y="586.4" width="4.4" height="19.6" fill="#c9c4bf" /><rect x="493.6" y="586.4" width="8.8" height="19.6" fill="#bdb8b3" /><rect x="486.3" y="585.4" width="16.0" height="1.5" fill="#6f6a66" /><rect x="407.0" y="636.8" width="14.0" height="45.9" fill="#1e1b1a" /><rect x="408.2" y="636.8" width="1.0" height="45.9" fill="#8a7f78" /><rect x="410.9" y="636.8" width="1.4" height="45.9" fill="#45372f" /><rect x="413.6" y="636.8" width="1.0" height="45.9" fill="#8a7f78" /><rect x="416.3" y="636.8" width="1.4" height="45.9" fill="#45372f" /><rect x="419.0" y="636.8" width="1.0" height="45.9" fill="#8a7f78" /><rect x="445.0" y="636.8" width="34.0" height="45.9" fill="#1e1b1a" /><rect x="446.2" y="636.8" width="1.0" height="45.9" fill="#8a7f78" /><rect x="448.9" y="636.8" width="1.4" height="45.9" fill="#45372f" /><rect x="451.6" y="636.8" width="1.0" height="45.9" fill="#8a7f78" /><rect x="454.3" y="636.8" width="1.4" height="45.9" fill="#45372f" /><rect x="457.0" y="636.8" width="1.0" height="45.9" fill="#8a7f78" /><rect x="459.7" y="636.8" width="1.4" height="45.9" fill="#45372f" /><rect x="462.4" y="636.8" width="1.0" height="45.9" fill="#8a7f78" /><rect x="465.1" y="636.8" width="1.4" height="45.9" fill="#45372f" /><rect x="467.8" y="636.8" width="1.0" height="45.9" fill="#8a7f78" /><rect x="470.5" y="636.8" width="1.4" height="45.9" fill="#45372f" /><rect x="473.2" y="636.8" width="1.0" height="45.9" fill="#8a7f78" /><rect x="475.9" y="636.8" width="1.4" height="45.9" fill="#45372f" /><rect x="421.0" y="641.0" width="23.7" height="31.0" fill="#1b1a1a" /><rect x="423.4" y="643.4" width="8.3" height="26.2" fill="#a39a92" /><rect x="423.4" y="643.4" width="3.7" height="26.2" fill="#736d68" /><rect x="428.5" y="643.4" width="0.8" height="26.2" fill="#c2bbb4" /><rect x="434.1" y="643.4" width="8.2" height="26.2" fill="#aaa29b" /><rect x="480.0" y="640.0" width="24.7" height="31.4" fill="#1b1a1a" /><rect x="482.4" y="642.4" width="8.8" height="26.6" fill="#a39a92" /><rect x="482.4" y="642.4" width="3.9" height="26.6" fill="#736d68" /><rect x="487.8" y="642.4" width="0.9" height="26.6" fill="#c2bbb4" /><rect x="493.6" y="642.4" width="8.8" height="26.6" fill="#aaa29b" /><rect x="486.8" y="649.4" width="4.4" height="19.6" fill="#c9c4bf" /><rect x="493.6" y="649.4" width="8.8" height="19.6" fill="#bdb8b3" /><rect x="486.3" y="648.4" width="16.0" height="1.5" fill="#6f6a66" /><rect x="407.0" y="699.8" width="14.0" height="45.9" fill="#1e1b1a" /><rect x="408.2" y="699.8" width="1.0" height="45.9" fill="#8a7f78" /><rect x="410.9" y="699.8" width="1.4" height="45.9" fill="#45372f" /><rect x="413.6" y="699.8" width="1.0" height="45.9" fill="#8a7f78" /><rect x="416.3" y="699.8" width="1.4" height="45.9" fill="#45372f" /><rect x="419.0" y="699.8" width="1.0" height="45.9" fill="#8a7f78" /><rect x="445.0" y="699.8" width="34.0" height="45.9" fill="#1e1b1a" /><rect x="446.2" y="699.8" width="1.0" height="45.9" fill="#8a7f78" /><rect x="448.9" y="699.8" width="1.4" height="45.9" fill="#45372f" /><rect x="451.6" y="699.8" width="1.0" height="45.9" fill="#8a7f78" /><rect x="454.3" y="699.8" width="1.4" height="45.9" fill="#45372f" /><rect x="457.0" y="699.8" width="1.0" height="45.9" fill="#8a7f78" /><rect x="459.7" y="699.8" width="1.4" height="45.9" fill="#45372f" /><rect x="462.4" y="699.8" width="1.0" height="45.9" fill="#8a7f78" /><rect x="465.1" y="699.8" width="1.4" height="45.9" fill="#45372f" /><rect x="467.8" y="699.8" width="1.0" height="45.9" fill="#8a7f78" /><rect x="470.5" y="699.8" width="1.4" height="45.9" fill="#45372f" /><rect x="473.2" y="699.8" width="1.0" height="45.9" fill="#8a7f78" /><rect x="475.9" y="699.8" width="1.4" height="45.9" fill="#45372f" /><rect x="421.0" y="704.0" width="23.7" height="31.0" fill="#1b1a1a" /><rect x="423.4" y="706.4" width="8.3" height="26.2" fill="#a39a92" /><rect x="423.4" y="706.4" width="3.7" height="26.2" fill="#736d68" /><rect x="428.5" y="706.4" width="0.8" height="26.2" fill="#c2bbb4" /><rect x="434.1" y="706.4" width="8.2" height="26.2" fill="#aaa29b" /><rect x="480.0" y="703.0" width="24.7" height="31.4" fill="#1b1a1a" /><rect x="482.4" y="705.4" width="8.8" height="26.6" fill="#a39a92" /><rect x="482.4" y="705.4" width="3.9" height="26.6" fill="#736d68" /><rect x="487.8" y="705.4" width="0.9" height="26.6" fill="#c2bbb4" /><rect x="493.6" y="705.4" width="8.8" height="26.6" fill="#aaa29b" /><rect x="486.8" y="712.4" width="4.4" height="19.6" fill="#c9c4bf" /><rect x="493.6" y="712.4" width="8.8" height="19.6" fill="#bdb8b3" /><rect x="486.3" y="711.4" width="16.0" height="1.5" fill="#6f6a66" /><rect x="407.0" y="429.7" width="119.0" height="19.0" fill="#1b1a1a" /><rect x="407.0" y="430.7" width="119.0" height="17.0" fill="#767673" /><rect x="402.0" y="436.3" width="69.0" height="8.0" fill="#1b1a1a" /><rect x="403.0" y="437.3" width="67.0" height="2.5" fill="#6e625b" /><rect x="405.0" y="440.8" width="65.0" height="2.5" fill="#6e625b" /><rect x="407.0" y="492.7" width="119.0" height="19.0" fill="#1b1a1a" /><rect x="407.0" y="493.7" width="119.0" height="17.0" fill="#767673" /><rect x="402.0" y="499.3" width="69.0" height="8.0" fill="#1b1a1a" /><rect x="403.0" y="500.3" width="67.0" height="2.5" fill="#6e625b" /><rect x="405.0" y="503.8" width="65.0" height="2.5" fill="#6e625b" /><rect x="407.0" y="555.7" width="119.0" height="19.0" fill="#1b1a1a" /><rect x="407.0" y="556.7" width="119.0" height="17.0" fill="#767673" /><rect x="402.0" y="562.3" width="69.0" height="8.0" fill="#1b1a1a" /><rect x="403.0" y="563.3" width="67.0" height="2.5" fill="#6e625b" /><rect x="405.0" y="566.8" width="65.0" height="2.5" fill="#6e625b" /><rect x="407.0" y="618.7" width="119.0" height="19.0" fill="#1b1a1a" /><rect x="407.0" y="619.7" width="119.0" height="17.0" fill="#767673" /><rect x="402.0" y="625.3" width="69.0" height="8.0" fill="#1b1a1a" /><rect x="403.0" y="626.3" width="67.0" height="2.5" fill="#6e625b" /><rect x="405.0" y="629.8" width="65.0" height="2.5" fill="#6e625b" /><rect x="407.0" y="681.7" width="119.0" height="19.0" fill="#1b1a1a" /><rect x="407.0" y="682.7" width="119.0" height="17.0" fill="#767673" /><rect x="402.0" y="688.3" width="69.0" height="8.0" fill="#1b1a1a" /><rect x="403.0" y="689.3" width="67.0" height="2.5" fill="#6e625b" /><rect x="405.0" y="692.8" width="65.0" height="2.5" fill="#6e625b" /><rect x="400.0" y="744.9" width="126.0" height="13.5" fill="#1b1a1a" /><rect x="400.0" y="745.9" width="126.0" height="11.5" fill="#767673" /><rect x="526.0" y="381.0" width="34.0" height="379.0" fill="#1f1b19" /><path d="M526 432 L560 440" stroke="#2c2724" stroke-width="2"/><path d="M526 495 L560 503" stroke="#2c2724" stroke-width="2"/><path d="M526 558 L560 566" stroke="#2c2724" stroke-width="2"/><path d="M526 621 L560 629" stroke="#2c2724" stroke-width="2"/><path d="M526 684 L560 692" stroke="#2c2724" stroke-width="2"/><path d="M526 747 L560 755" stroke="#2c2724" stroke-width="2"/><rect x="560.0" y="381.0" width="9.0" height="377.0" fill="#7c7169" /><rect x="560.0" y="396.0" width="9.0" height="30.0" fill="#1b1a1a" /><rect x="562.0" y="398.0" width="5.5" height="26.0" fill="#a39a92" /><rect x="560.0" y="459.0" width="9.0" height="30.0" fill="#1b1a1a" /><rect x="562.0" y="461.0" width="5.5" height="26.0" fill="#a39a92" /><rect x="560.0" y="522.0" width="9.0" height="30.0" fill="#1b1a1a" /><rect x="562.0" y="524.0" width="5.5" height="26.0" fill="#a39a92" /><rect x="560.0" y="585.0" width="9.0" height="30.0" fill="#1b1a1a" /><rect x="562.0" y="587.0" width="5.5" height="26.0" fill="#a39a92" /><rect x="560.0" y="648.0" width="9.0" height="30.0" fill="#1b1a1a" /><rect x="562.0" y="650.0" width="5.5" height="26.0" fill="#a39a92" /><rect x="560.0" y="711.0" width="9.0" height="30.0" fill="#1b1a1a" /><rect x="562.0" y="713.0" width="5.5" height="26.0" fill="#a39a92" /><rect x="560.0" y="429.0" width="9.0" height="20.0" fill="#1b1a1a" /><rect x="560.0" y="430.0" width="9.0" height="18.0" fill="#767673" /><rect x="560.0" y="492.0" width="9.0" height="20.0" fill="#1b1a1a" /><rect x="560.0" y="493.0" width="9.0" height="18.0" fill="#767673" /><rect x="560.0" y="555.0" width="9.0" height="20.0" fill="#1b1a1a" /><rect x="560.0" y="556.0" width="9.0" height="18.0" fill="#767673" /><rect x="560.0" y="618.0" width="9.0" height="20.0" fill="#1b1a1a" /><rect x="560.0" y="619.0" width="9.0" height="18.0" fill="#767673" /><rect x="560.0" y="681.0" width="9.0" height="20.0" fill="#1b1a1a" /><rect x="560.0" y="682.0" width="9.0" height="18.0" fill="#767673" /><rect x="569.0" y="381.0" width="113.0" height="374.0" fill="#7c7169" /><rect x="616.0" y="381.0" width="33.0" height="47.0" fill="#1e1b1a" /><rect x="617.2" y="381.0" width="1.0" height="47.0" fill="#8a7f78" /><rect x="619.9" y="381.0" width="1.4" height="47.0" fill="#45372f" /><rect x="622.6" y="381.0" width="1.0" height="47.0" fill="#8a7f78" /><rect x="625.3" y="381.0" width="1.4" height="47.0" fill="#45372f" /><rect x="628.0" y="381.0" width="1.0" height="47.0" fill="#8a7f78" /><rect x="630.7" y="381.0" width="1.4" height="47.0" fill="#45372f" /><rect x="633.4" y="381.0" width="1.0" height="47.0" fill="#8a7f78" /><rect x="636.1" y="381.0" width="1.4" height="47.0" fill="#45372f" /><rect x="638.8" y="381.0" width="1.0" height="47.0" fill="#8a7f78" /><rect x="641.5" y="381.0" width="1.4" height="47.0" fill="#45372f" /><rect x="644.2" y="381.0" width="1.0" height="47.0" fill="#8a7f78" /><rect x="646.9" y="381.0" width="1.4" height="47.0" fill="#45372f" /><rect x="675.0" y="381.0" width="7.0" height="47.0" fill="#1e1b1a" /><rect x="676.2" y="381.0" width="1.0" height="47.0" fill="#8a7f78" /><rect x="678.9" y="381.0" width="1.4" height="47.0" fill="#45372f" /><rect x="591.4" y="386.4" width="24.6" height="31.3" fill="#1b1a1a" /><rect x="593.8" y="388.8" width="8.7" height="26.5" fill="#a39a92" /><rect x="593.8" y="388.8" width="3.9" height="26.5" fill="#736d68" /><rect x="599.2" y="388.8" width="0.9" height="26.5" fill="#c2bbb4" /><rect x="604.9" y="388.8" width="8.7" height="26.5" fill="#aaa29b" /><rect x="649.0" y="386.4" width="26.0" height="31.3" fill="#1b1a1a" /><rect x="651.4" y="388.8" width="9.4" height="26.5" fill="#a39a92" /><rect x="651.4" y="388.8" width="4.2" height="26.5" fill="#736d68" /><rect x="657.2" y="388.8" width="0.9" height="26.5" fill="#c2bbb4" /><rect x="663.2" y="388.8" width="9.4" height="26.5" fill="#aaa29b" /><rect x="656.1" y="395.8" width="4.7" height="19.5" fill="#c9c4bf" /><rect x="663.2" y="395.8" width="9.4" height="19.5" fill="#bdb8b3" /><rect x="655.6" y="394.8" width="17.0" height="1.5" fill="#6f6a66" /><rect x="616.0" y="446.0" width="33.0" height="45.0" fill="#1e1b1a" /><rect x="617.2" y="446.0" width="1.0" height="45.0" fill="#8a7f78" /><rect x="619.9" y="446.0" width="1.4" height="45.0" fill="#45372f" /><rect x="622.6" y="446.0" width="1.0" height="45.0" fill="#8a7f78" /><rect x="625.3" y="446.0" width="1.4" height="45.0" fill="#45372f" /><rect x="628.0" y="446.0" width="1.0" height="45.0" fill="#8a7f78" /><rect x="630.7" y="446.0" width="1.4" height="45.0" fill="#45372f" /><rect x="633.4" y="446.0" width="1.0" height="45.0" fill="#8a7f78" /><rect x="636.1" y="446.0" width="1.4" height="45.0" fill="#45372f" /><rect x="638.8" y="446.0" width="1.0" height="45.0" fill="#8a7f78" /><rect x="641.5" y="446.0" width="1.4" height="45.0" fill="#45372f" /><rect x="644.2" y="446.0" width="1.0" height="45.0" fill="#8a7f78" /><rect x="646.9" y="446.0" width="1.4" height="45.0" fill="#45372f" /><rect x="675.0" y="446.0" width="7.0" height="45.0" fill="#1e1b1a" /><rect x="676.2" y="446.0" width="1.0" height="45.0" fill="#8a7f78" /><rect x="678.9" y="446.0" width="1.4" height="45.0" fill="#45372f" /><rect x="591.4" y="449.4" width="24.6" height="31.3" fill="#1b1a1a" /><rect x="593.8" y="451.8" width="8.7" height="26.5" fill="#a39a92" /><rect x="593.8" y="451.8" width="3.9" height="26.5" fill="#736d68" /><rect x="599.2" y="451.8" width="0.9" height="26.5" fill="#c2bbb4" /><rect x="604.9" y="451.8" width="8.7" height="26.5" fill="#aaa29b" /><rect x="649.0" y="449.4" width="26.0" height="31.3" fill="#1b1a1a" /><rect x="651.4" y="451.8" width="9.4" height="26.5" fill="#a39a92" /><rect x="651.4" y="451.8" width="4.2" height="26.5" fill="#736d68" /><rect x="657.2" y="451.8" width="0.9" height="26.5" fill="#c2bbb4" /><rect x="663.2" y="451.8" width="9.4" height="26.5" fill="#aaa29b" /><rect x="656.1" y="458.8" width="4.7" height="19.5" fill="#c9c4bf" /><rect x="663.2" y="458.8" width="9.4" height="19.5" fill="#bdb8b3" /><rect x="655.6" y="457.8" width="17.0" height="1.5" fill="#6f6a66" /><rect x="616.0" y="509.0" width="33.0" height="45.0" fill="#1e1b1a" /><rect x="617.2" y="509.0" width="1.0" height="45.0" fill="#8a7f78" /><rect x="619.9" y="509.0" width="1.4" height="45.0" fill="#45372f" /><rect x="622.6" y="509.0" width="1.0" height="45.0" fill="#8a7f78" /><rect x="625.3" y="509.0" width="1.4" height="45.0" fill="#45372f" /><rect x="628.0" y="509.0" width="1.0" height="45.0" fill="#8a7f78" /><rect x="630.7" y="509.0" width="1.4" height="45.0" fill="#45372f" /><rect x="633.4" y="509.0" width="1.0" height="45.0" fill="#8a7f78" /><rect x="636.1" y="509.0" width="1.4" height="45.0" fill="#45372f" /><rect x="638.8" y="509.0" width="1.0" height="45.0" fill="#8a7f78" /><rect x="641.5" y="509.0" width="1.4" height="45.0" fill="#45372f" /><rect x="644.2" y="509.0" width="1.0" height="45.0" fill="#8a7f78" /><rect x="646.9" y="509.0" width="1.4" height="45.0" fill="#45372f" /><rect x="675.0" y="509.0" width="7.0" height="45.0" fill="#1e1b1a" /><rect x="676.2" y="509.0" width="1.0" height="45.0" fill="#8a7f78" /><rect x="678.9" y="509.0" width="1.4" height="45.0" fill="#45372f" /><rect x="591.4" y="512.4" width="24.6" height="31.3" fill="#1b1a1a" /><rect x="593.8" y="514.8" width="8.7" height="26.5" fill="#a39a92" /><rect x="593.8" y="514.8" width="3.9" height="26.5" fill="#736d68" /><rect x="599.2" y="514.8" width="0.9" height="26.5" fill="#c2bbb4" /><rect x="604.9" y="514.8" width="8.7" height="26.5" fill="#aaa29b" /><rect x="649.0" y="512.4" width="26.0" height="31.3" fill="#1b1a1a" /><rect x="651.4" y="514.8" width="9.4" height="26.5" fill="#a39a92" /><rect x="651.4" y="514.8" width="4.2" height="26.5" fill="#736d68" /><rect x="657.2" y="514.8" width="0.9" height="26.5" fill="#c2bbb4" /><rect x="663.2" y="514.8" width="9.4" height="26.5" fill="#aaa29b" /><rect x="656.1" y="521.8" width="4.7" height="19.5" fill="#c9c4bf" /><rect x="663.2" y="521.8" width="9.4" height="19.5" fill="#bdb8b3" /><rect x="655.6" y="520.8" width="17.0" height="1.5" fill="#6f6a66" /><rect x="616.0" y="572.0" width="33.0" height="45.0" fill="#1e1b1a" /><rect x="617.2" y="572.0" width="1.0" height="45.0" fill="#8a7f78" /><rect x="619.9" y="572.0" width="1.4" height="45.0" fill="#45372f" /><rect x="622.6" y="572.0" width="1.0" height="45.0" fill="#8a7f78" /><rect x="625.3" y="572.0" width="1.4" height="45.0" fill="#45372f" /><rect x="628.0" y="572.0" width="1.0" height="45.0" fill="#8a7f78" /><rect x="630.7" y="572.0" width="1.4" height="45.0" fill="#45372f" /><rect x="633.4" y="572.0" width="1.0" height="45.0" fill="#8a7f78" /><rect x="636.1" y="572.0" width="1.4" height="45.0" fill="#45372f" /><rect x="638.8" y="572.0" width="1.0" height="45.0" fill="#8a7f78" /><rect x="641.5" y="572.0" width="1.4" height="45.0" fill="#45372f" /><rect x="644.2" y="572.0" width="1.0" height="45.0" fill="#8a7f78" /><rect x="646.9" y="572.0" width="1.4" height="45.0" fill="#45372f" /><rect x="675.0" y="572.0" width="7.0" height="45.0" fill="#1e1b1a" /><rect x="676.2" y="572.0" width="1.0" height="45.0" fill="#8a7f78" /><rect x="678.9" y="572.0" width="1.4" height="45.0" fill="#45372f" /><rect x="591.4" y="575.4" width="24.6" height="31.3" fill="#1b1a1a" /><rect x="593.8" y="577.8" width="8.7" height="26.5" fill="#a39a92" /><rect x="593.8" y="577.8" width="3.9" height="26.5" fill="#736d68" /><rect x="599.2" y="577.8" width="0.9" height="26.5" fill="#c2bbb4" /><rect x="604.9" y="577.8" width="8.7" height="26.5" fill="#aaa29b" /><rect x="649.0" y="575.4" width="26.0" height="31.3" fill="#1b1a1a" /><rect x="651.4" y="577.8" width="9.4" height="26.5" fill="#a39a92" /><rect x="651.4" y="577.8" width="4.2" height="26.5" fill="#736d68" /><rect x="657.2" y="577.8" width="0.9" height="26.5" fill="#c2bbb4" /><rect x="663.2" y="577.8" width="9.4" height="26.5" fill="#aaa29b" /><rect x="656.1" y="584.8" width="4.7" height="19.5" fill="#c9c4bf" /><rect x="663.2" y="584.8" width="9.4" height="19.5" fill="#bdb8b3" /><rect x="655.6" y="583.8" width="17.0" height="1.5" fill="#6f6a66" /><rect x="616.0" y="635.0" width="33.0" height="45.0" fill="#1e1b1a" /><rect x="617.2" y="635.0" width="1.0" height="45.0" fill="#8a7f78" /><rect x="619.9" y="635.0" width="1.4" height="45.0" fill="#45372f" /><rect x="622.6" y="635.0" width="1.0" height="45.0" fill="#8a7f78" /><rect x="625.3" y="635.0" width="1.4" height="45.0" fill="#45372f" /><rect x="628.0" y="635.0" width="1.0" height="45.0" fill="#8a7f78" /><rect x="630.7" y="635.0" width="1.4" height="45.0" fill="#45372f" /><rect x="633.4" y="635.0" width="1.0" height="45.0" fill="#8a7f78" /><rect x="636.1" y="635.0" width="1.4" height="45.0" fill="#45372f" /><rect x="638.8" y="635.0" width="1.0" height="45.0" fill="#8a7f78" /><rect x="641.5" y="635.0" width="1.4" height="45.0" fill="#45372f" /><rect x="644.2" y="635.0" width="1.0" height="45.0" fill="#8a7f78" /><rect x="646.9" y="635.0" width="1.4" height="45.0" fill="#45372f" /><rect x="675.0" y="635.0" width="7.0" height="45.0" fill="#1e1b1a" /><rect x="676.2" y="635.0" width="1.0" height="45.0" fill="#8a7f78" /><rect x="678.9" y="635.0" width="1.4" height="45.0" fill="#45372f" /><rect x="591.4" y="638.4" width="24.6" height="31.3" fill="#1b1a1a" /><rect x="593.8" y="640.8" width="8.7" height="26.5" fill="#a39a92" /><rect x="593.8" y="640.8" width="3.9" height="26.5" fill="#736d68" /><rect x="599.2" y="640.8" width="0.9" height="26.5" fill="#c2bbb4" /><rect x="604.9" y="640.8" width="8.7" height="26.5" fill="#aaa29b" /><rect x="649.0" y="638.4" width="26.0" height="31.3" fill="#1b1a1a" /><rect x="651.4" y="640.8" width="9.4" height="26.5" fill="#a39a92" /><rect x="651.4" y="640.8" width="4.2" height="26.5" fill="#736d68" /><rect x="657.2" y="640.8" width="0.9" height="26.5" fill="#c2bbb4" /><rect x="663.2" y="640.8" width="9.4" height="26.5" fill="#aaa29b" /><rect x="656.1" y="647.8" width="4.7" height="19.5" fill="#c9c4bf" /><rect x="663.2" y="647.8" width="9.4" height="19.5" fill="#bdb8b3" /><rect x="655.6" y="646.8" width="17.0" height="1.5" fill="#6f6a66" /><rect x="616.0" y="698.0" width="33.0" height="45.0" fill="#1e1b1a" /><rect x="617.2" y="698.0" width="1.0" height="45.0" fill="#8a7f78" /><rect x="619.9" y="698.0" width="1.4" height="45.0" fill="#45372f" /><rect x="622.6" y="698.0" width="1.0" height="45.0" fill="#8a7f78" /><rect x="625.3" y="698.0" width="1.4" height="45.0" fill="#45372f" /><rect x="628.0" y="698.0" width="1.0" height="45.0" fill="#8a7f78" /><rect x="630.7" y="698.0" width="1.4" height="45.0" fill="#45372f" /><rect x="633.4" y="698.0" width="1.0" height="45.0" fill="#8a7f78" /><rect x="636.1" y="698.0" width="1.4" height="45.0" fill="#45372f" /><rect x="638.8" y="698.0" width="1.0" height="45.0" fill="#8a7f78" /><rect x="641.5" y="698.0" width="1.4" height="45.0" fill="#45372f" /><rect x="644.2" y="698.0" width="1.0" height="45.0" fill="#8a7f78" /><rect x="646.9" y="698.0" width="1.4" height="45.0" fill="#45372f" /><rect x="675.0" y="698.0" width="7.0" height="45.0" fill="#1e1b1a" /><rect x="676.2" y="698.0" width="1.0" height="45.0" fill="#8a7f78" /><rect x="678.9" y="698.0" width="1.4" height="45.0" fill="#45372f" /><rect x="591.4" y="701.4" width="24.6" height="31.3" fill="#1b1a1a" /><rect x="593.8" y="703.8" width="8.7" height="26.5" fill="#a39a92" /><rect x="593.8" y="703.8" width="3.9" height="26.5" fill="#736d68" /><rect x="599.2" y="703.8" width="0.9" height="26.5" fill="#c2bbb4" /><rect x="604.9" y="703.8" width="8.7" height="26.5" fill="#aaa29b" /><rect x="649.0" y="701.4" width="26.0" height="31.3" fill="#1b1a1a" /><rect x="651.4" y="703.8" width="9.4" height="26.5" fill="#a39a92" /><rect x="651.4" y="703.8" width="4.2" height="26.5" fill="#736d68" /><rect x="657.2" y="703.8" width="0.9" height="26.5" fill="#c2bbb4" /><rect x="663.2" y="703.8" width="9.4" height="26.5" fill="#aaa29b" /><rect x="656.1" y="710.8" width="4.7" height="19.5" fill="#c9c4bf" /><rect x="663.2" y="710.8" width="9.4" height="19.5" fill="#bdb8b3" /><rect x="655.6" y="709.8" width="17.0" height="1.5" fill="#6f6a66" /><rect x="569.0" y="427.0" width="113.0" height="20.0" fill="#1b1a1a" /><rect x="569.0" y="428.0" width="113.0" height="18.0" fill="#767673" /><rect x="618.0" y="432.0" width="62.0" height="8.0" fill="#1b1a1a" /><rect x="619.0" y="433.0" width="60.0" height="2.5" fill="#6e625b" /><rect x="621.0" y="436.5" width="58.0" height="2.5" fill="#6e625b" /><rect x="569.0" y="490.0" width="113.0" height="20.0" fill="#1b1a1a" /><rect x="569.0" y="491.0" width="113.0" height="18.0" fill="#767673" /><rect x="618.0" y="495.0" width="62.0" height="8.0" fill="#1b1a1a" /><rect x="619.0" y="496.0" width="60.0" height="2.5" fill="#6e625b" /><rect x="621.0" y="499.5" width="58.0" height="2.5" fill="#6e625b" /><rect x="569.0" y="553.0" width="113.0" height="20.0" fill="#1b1a1a" /><rect x="569.0" y="554.0" width="113.0" height="18.0" fill="#767673" /><rect x="618.0" y="558.0" width="62.0" height="8.0" fill="#1b1a1a" /><rect x="619.0" y="559.0" width="60.0" height="2.5" fill="#6e625b" /><rect x="621.0" y="562.5" width="58.0" height="2.5" fill="#6e625b" /><rect x="569.0" y="616.0" width="113.0" height="20.0" fill="#1b1a1a" /><rect x="569.0" y="617.0" width="113.0" height="18.0" fill="#767673" /><rect x="618.0" y="621.0" width="62.0" height="8.0" fill="#1b1a1a" /><rect x="619.0" y="622.0" width="60.0" height="2.5" fill="#6e625b" /><rect x="621.0" y="625.5" width="58.0" height="2.5" fill="#6e625b" /><rect x="569.0" y="679.0" width="113.0" height="20.0" fill="#1b1a1a" /><rect x="569.0" y="680.0" width="113.0" height="18.0" fill="#767673" /><rect x="618.0" y="684.0" width="62.0" height="8.0" fill="#1b1a1a" /><rect x="619.0" y="685.0" width="60.0" height="2.5" fill="#6e625b" /><rect x="621.0" y="688.5" width="58.0" height="2.5" fill="#6e625b" /><rect x="569.0" y="742.0" width="113.0" height="13.0" fill="#1b1a1a" /><rect x="569.0" y="743.0" width="113.0" height="11.0" fill="#767673" /><path d="M400.0 364.0 L682.0 362.0 L682.0 381.0 L400.0 381.0Z" fill="#1b1a1a" /><path d="M403.0 366.0 L682.0 364.0 L682.0 373.0 L403.0 376.0Z" fill="#6f645d" /><rect x="482.0" y="338.0" width="200.0" height="25.0" fill="#7c7169" /><path d="M452.0 324.0 L682.0 322.0 L682.0 340.0 L480.0 340.0 L452.0 331.0Z" fill="#1b1a1a" /><path d="M454.0 326.0 L682.0 324.0 L682.0 331.0 L454.0 333.0Z" fill="#6f645d" /><path d="M570.0 360.0 L682.0 358.5 L682.0 366.0 L570.0 367.0Z" fill="#1b1a1a" /><path d="M572.0 361.0 L682.0 359.5 L682.0 364.5 L572.0 365.5Z" fill="#6f645d" /><rect x="682.0" y="340.0" width="66.0" height="412.0" fill="#7c7169" /><rect x="682.0" y="424.6" width="66.0" height="20.4" fill="#1b1a1a" /><rect x="682.0" y="425.6" width="66.0" height="18.4" fill="#767673" /><rect x="682.0" y="487.6" width="66.0" height="20.4" fill="#1b1a1a" /><rect x="682.0" y="488.6" width="66.0" height="18.4" fill="#767673" /><rect x="682.0" y="550.6" width="66.0" height="20.4" fill="#1b1a1a" /><rect x="682.0" y="551.6" width="66.0" height="18.4" fill="#767673" /><rect x="682.0" y="613.6" width="66.0" height="20.4" fill="#1b1a1a" /><rect x="682.0" y="614.6" width="66.0" height="18.4" fill="#767673" /><rect x="682.0" y="676.6" width="66.0" height="20.4" fill="#1b1a1a" /><rect x="682.0" y="677.6" width="66.0" height="18.4" fill="#767673" /><rect x="703.4" y="348.0" width="22.1" height="23.5" fill="#1b1a1a" /><rect x="705.8" y="350.4" width="7.5" height="18.7" fill="#6e6963" /><rect x="715.7" y="350.4" width="7.4" height="18.7" fill="#6e6963" /><rect x="703.4" y="411.0" width="22.1" height="31.0" fill="#1b1a1a" /><rect x="705.8" y="413.4" width="7.5" height="26.2" fill="#6e6963" /><rect x="715.7" y="413.4" width="7.4" height="26.2" fill="#a39a92" /><rect x="703.4" y="474.0" width="22.1" height="31.0" fill="#1b1a1a" /><rect x="705.8" y="476.4" width="7.5" height="26.2" fill="#6e6963" /><rect x="715.7" y="476.4" width="7.4" height="26.2" fill="#a39a92" /><rect x="703.4" y="537.0" width="22.1" height="31.0" fill="#1b1a1a" /><rect x="705.8" y="539.4" width="7.5" height="26.2" fill="#6e6963" /><rect x="715.7" y="539.4" width="7.4" height="26.2" fill="#a39a92" /><rect x="703.4" y="600.0" width="22.1" height="31.0" fill="#1b1a1a" /><rect x="705.8" y="602.4" width="7.5" height="26.2" fill="#6e6963" /><rect x="715.7" y="602.4" width="7.4" height="26.2" fill="#a39a92" /><rect x="703.4" y="663.0" width="22.1" height="31.0" fill="#1b1a1a" /><rect x="705.8" y="665.4" width="7.5" height="26.2" fill="#6e6963" /><rect x="715.7" y="665.4" width="7.4" height="26.2" fill="#a39a92" /><path d="M682.0 321.5 L719.0 321.0 L748.0 328.0 L748.0 340.5 L682.0 340.5Z" fill="#1b1a1a" /><path d="M683.0 323.0 L719.0 322.5 L747.0 329.5 L747.0 333.0 L683.0 333.0Z" fill="#6f645d" /><path d="M683.0 335.0 L747.0 335.0 L747.0 339.0 L683.0 339.0Z" fill="#6f645d" /><path d="M719.0 321.0 L808.6 341.0 L808.0 358.0 L754.0 358.0 L754.0 366.0 L748.0 366.0 L748.0 328.0Z" fill="#1f1b19" /><rect x="748.0" y="373.0" width="126.0" height="379.0" fill="#7c7169" /><rect x="753.0" y="373.0" width="13.4" height="51.5" fill="#1e1b1a" /><rect x="754.2" y="373.0" width="1.0" height="51.5" fill="#8a7f78" /><rect x="756.9" y="373.0" width="1.4" height="51.5" fill="#45372f" /><rect x="759.6" y="373.0" width="1.0" height="51.5" fill="#8a7f78" /><rect x="762.3" y="373.0" width="1.4" height="51.5" fill="#45372f" /><rect x="765.0" y="373.0" width="1.0" height="51.5" fill="#8a7f78" /><rect x="792.0" y="373.0" width="33.0" height="51.5" fill="#1e1b1a" /><rect x="793.2" y="373.0" width="1.0" height="51.5" fill="#8a7f78" /><rect x="795.9" y="373.0" width="1.4" height="51.5" fill="#45372f" /><rect x="798.6" y="373.0" width="1.0" height="51.5" fill="#8a7f78" /><rect x="801.3" y="373.0" width="1.4" height="51.5" fill="#45372f" /><rect x="804.0" y="373.0" width="1.0" height="51.5" fill="#8a7f78" /><rect x="806.7" y="373.0" width="1.4" height="51.5" fill="#45372f" /><rect x="809.4" y="373.0" width="1.0" height="51.5" fill="#8a7f78" /><rect x="812.1" y="373.0" width="1.4" height="51.5" fill="#45372f" /><rect x="814.8" y="373.0" width="1.0" height="51.5" fill="#8a7f78" /><rect x="817.5" y="373.0" width="1.4" height="51.5" fill="#45372f" /><rect x="820.2" y="373.0" width="1.0" height="51.5" fill="#8a7f78" /><rect x="822.9" y="373.0" width="1.4" height="51.5" fill="#45372f" /><rect x="766.4" y="383.0" width="25.4" height="31.0" fill="#1b1a1a" /><rect x="768.8" y="385.4" width="9.1" height="26.2" fill="#a39a92" /><rect x="768.8" y="385.4" width="4.1" height="26.2" fill="#736d68" /><rect x="774.4" y="385.4" width="0.9" height="26.2" fill="#c2bbb4" /><rect x="780.3" y="385.4" width="9.1" height="26.2" fill="#aaa29b" /><rect x="825.0" y="383.0" width="26.5" height="31.0" fill="#1b1a1a" /><rect x="827.4" y="385.4" width="9.6" height="26.2" fill="#a39a92" /><rect x="827.4" y="385.4" width="4.3" height="26.2" fill="#736d68" /><rect x="833.4" y="385.4" width="1.0" height="26.2" fill="#c2bbb4" /><rect x="839.5" y="385.4" width="9.6" height="26.2" fill="#aaa29b" /><rect x="832.2" y="392.4" width="4.8" height="19.2" fill="#c9c4bf" /><rect x="839.5" y="392.4" width="9.6" height="19.2" fill="#bdb8b3" /><rect x="831.7" y="391.4" width="17.4" height="1.5" fill="#6f6a66" /><rect x="753.0" y="443.8" width="13.4" height="43.7" fill="#1e1b1a" /><rect x="754.2" y="443.8" width="1.0" height="43.7" fill="#8a7f78" /><rect x="756.9" y="443.8" width="1.4" height="43.7" fill="#45372f" /><rect x="759.6" y="443.8" width="1.0" height="43.7" fill="#8a7f78" /><rect x="762.3" y="443.8" width="1.4" height="43.7" fill="#45372f" /><rect x="765.0" y="443.8" width="1.0" height="43.7" fill="#8a7f78" /><rect x="792.0" y="443.8" width="33.0" height="43.7" fill="#1e1b1a" /><rect x="793.2" y="443.8" width="1.0" height="43.7" fill="#8a7f78" /><rect x="795.9" y="443.8" width="1.4" height="43.7" fill="#45372f" /><rect x="798.6" y="443.8" width="1.0" height="43.7" fill="#8a7f78" /><rect x="801.3" y="443.8" width="1.4" height="43.7" fill="#45372f" /><rect x="804.0" y="443.8" width="1.0" height="43.7" fill="#8a7f78" /><rect x="806.7" y="443.8" width="1.4" height="43.7" fill="#45372f" /><rect x="809.4" y="443.8" width="1.0" height="43.7" fill="#8a7f78" /><rect x="812.1" y="443.8" width="1.4" height="43.7" fill="#45372f" /><rect x="814.8" y="443.8" width="1.0" height="43.7" fill="#8a7f78" /><rect x="817.5" y="443.8" width="1.4" height="43.7" fill="#45372f" /><rect x="820.2" y="443.8" width="1.0" height="43.7" fill="#8a7f78" /><rect x="822.9" y="443.8" width="1.4" height="43.7" fill="#45372f" /><rect x="766.4" y="446.0" width="25.4" height="31.0" fill="#1b1a1a" /><rect x="768.8" y="448.4" width="9.1" height="26.2" fill="#a39a92" /><rect x="768.8" y="448.4" width="4.1" height="26.2" fill="#736d68" /><rect x="774.4" y="448.4" width="0.9" height="26.2" fill="#c2bbb4" /><rect x="780.3" y="448.4" width="9.1" height="26.2" fill="#aaa29b" /><rect x="825.0" y="446.0" width="26.5" height="31.0" fill="#1b1a1a" /><rect x="827.4" y="448.4" width="9.6" height="26.2" fill="#a39a92" /><rect x="827.4" y="448.4" width="4.3" height="26.2" fill="#736d68" /><rect x="833.4" y="448.4" width="1.0" height="26.2" fill="#c2bbb4" /><rect x="839.5" y="448.4" width="9.6" height="26.2" fill="#aaa29b" /><rect x="832.2" y="455.4" width="4.8" height="19.2" fill="#c9c4bf" /><rect x="839.5" y="455.4" width="9.6" height="19.2" fill="#bdb8b3" /><rect x="831.7" y="454.4" width="17.4" height="1.5" fill="#6f6a66" /><rect x="753.0" y="506.8" width="13.4" height="43.7" fill="#1e1b1a" /><rect x="754.2" y="506.8" width="1.0" height="43.7" fill="#8a7f78" /><rect x="756.9" y="506.8" width="1.4" height="43.7" fill="#45372f" /><rect x="759.6" y="506.8" width="1.0" height="43.7" fill="#8a7f78" /><rect x="762.3" y="506.8" width="1.4" height="43.7" fill="#45372f" /><rect x="765.0" y="506.8" width="1.0" height="43.7" fill="#8a7f78" /><rect x="792.0" y="506.8" width="33.0" height="43.7" fill="#1e1b1a" /><rect x="793.2" y="506.8" width="1.0" height="43.7" fill="#8a7f78" /><rect x="795.9" y="506.8" width="1.4" height="43.7" fill="#45372f" /><rect x="798.6" y="506.8" width="1.0" height="43.7" fill="#8a7f78" /><rect x="801.3" y="506.8" width="1.4" height="43.7" fill="#45372f" /><rect x="804.0" y="506.8" width="1.0" height="43.7" fill="#8a7f78" /><rect x="806.7" y="506.8" width="1.4" height="43.7" fill="#45372f" /><rect x="809.4" y="506.8" width="1.0" height="43.7" fill="#8a7f78" /><rect x="812.1" y="506.8" width="1.4" height="43.7" fill="#45372f" /><rect x="814.8" y="506.8" width="1.0" height="43.7" fill="#8a7f78" /><rect x="817.5" y="506.8" width="1.4" height="43.7" fill="#45372f" /><rect x="820.2" y="506.8" width="1.0" height="43.7" fill="#8a7f78" /><rect x="822.9" y="506.8" width="1.4" height="43.7" fill="#45372f" /><rect x="766.4" y="509.0" width="25.4" height="31.0" fill="#1b1a1a" /><rect x="768.8" y="511.4" width="9.1" height="26.2" fill="#a39a92" /><rect x="768.8" y="511.4" width="4.1" height="26.2" fill="#736d68" /><rect x="774.4" y="511.4" width="0.9" height="26.2" fill="#c2bbb4" /><rect x="780.3" y="511.4" width="9.1" height="26.2" fill="#aaa29b" /><rect x="825.0" y="509.0" width="26.5" height="31.0" fill="#1b1a1a" /><rect x="827.4" y="511.4" width="9.6" height="26.2" fill="#a39a92" /><rect x="827.4" y="511.4" width="4.3" height="26.2" fill="#736d68" /><rect x="833.4" y="511.4" width="1.0" height="26.2" fill="#c2bbb4" /><rect x="839.5" y="511.4" width="9.6" height="26.2" fill="#aaa29b" /><rect x="832.2" y="518.4" width="4.8" height="19.2" fill="#c9c4bf" /><rect x="839.5" y="518.4" width="9.6" height="19.2" fill="#bdb8b3" /><rect x="831.7" y="517.4" width="17.4" height="1.5" fill="#6f6a66" /><rect x="753.0" y="569.8" width="13.4" height="43.7" fill="#1e1b1a" /><rect x="754.2" y="569.8" width="1.0" height="43.7" fill="#8a7f78" /><rect x="756.9" y="569.8" width="1.4" height="43.7" fill="#45372f" /><rect x="759.6" y="569.8" width="1.0" height="43.7" fill="#8a7f78" /><rect x="762.3" y="569.8" width="1.4" height="43.7" fill="#45372f" /><rect x="765.0" y="569.8" width="1.0" height="43.7" fill="#8a7f78" /><rect x="792.0" y="569.8" width="33.0" height="43.7" fill="#1e1b1a" /><rect x="793.2" y="569.8" width="1.0" height="43.7" fill="#8a7f78" /><rect x="795.9" y="569.8" width="1.4" height="43.7" fill="#45372f" /><rect x="798.6" y="569.8" width="1.0" height="43.7" fill="#8a7f78" /><rect x="801.3" y="569.8" width="1.4" height="43.7" fill="#45372f" /><rect x="804.0" y="569.8" width="1.0" height="43.7" fill="#8a7f78" /><rect x="806.7" y="569.8" width="1.4" height="43.7" fill="#45372f" /><rect x="809.4" y="569.8" width="1.0" height="43.7" fill="#8a7f78" /><rect x="812.1" y="569.8" width="1.4" height="43.7" fill="#45372f" /><rect x="814.8" y="569.8" width="1.0" height="43.7" fill="#8a7f78" /><rect x="817.5" y="569.8" width="1.4" height="43.7" fill="#45372f" /><rect x="820.2" y="569.8" width="1.0" height="43.7" fill="#8a7f78" /><rect x="822.9" y="569.8" width="1.4" height="43.7" fill="#45372f" /><rect x="766.4" y="572.0" width="25.4" height="31.0" fill="#1b1a1a" /><rect x="768.8" y="574.4" width="9.1" height="26.2" fill="#a39a92" /><rect x="768.8" y="574.4" width="4.1" height="26.2" fill="#736d68" /><rect x="774.4" y="574.4" width="0.9" height="26.2" fill="#c2bbb4" /><rect x="780.3" y="574.4" width="9.1" height="26.2" fill="#aaa29b" /><rect x="825.0" y="572.0" width="26.5" height="31.0" fill="#1b1a1a" /><rect x="827.4" y="574.4" width="9.6" height="26.2" fill="#a39a92" /><rect x="827.4" y="574.4" width="4.3" height="26.2" fill="#736d68" /><rect x="833.4" y="574.4" width="1.0" height="26.2" fill="#c2bbb4" /><rect x="839.5" y="574.4" width="9.6" height="26.2" fill="#aaa29b" /><rect x="832.2" y="581.4" width="4.8" height="19.2" fill="#c9c4bf" /><rect x="839.5" y="581.4" width="9.6" height="19.2" fill="#bdb8b3" /><rect x="831.7" y="580.4" width="17.4" height="1.5" fill="#6f6a66" /><rect x="753.0" y="632.8" width="13.4" height="43.7" fill="#1e1b1a" /><rect x="754.2" y="632.8" width="1.0" height="43.7" fill="#8a7f78" /><rect x="756.9" y="632.8" width="1.4" height="43.7" fill="#45372f" /><rect x="759.6" y="632.8" width="1.0" height="43.7" fill="#8a7f78" /><rect x="762.3" y="632.8" width="1.4" height="43.7" fill="#45372f" /><rect x="765.0" y="632.8" width="1.0" height="43.7" fill="#8a7f78" /><rect x="792.0" y="632.8" width="33.0" height="43.7" fill="#1e1b1a" /><rect x="793.2" y="632.8" width="1.0" height="43.7" fill="#8a7f78" /><rect x="795.9" y="632.8" width="1.4" height="43.7" fill="#45372f" /><rect x="798.6" y="632.8" width="1.0" height="43.7" fill="#8a7f78" /><rect x="801.3" y="632.8" width="1.4" height="43.7" fill="#45372f" /><rect x="804.0" y="632.8" width="1.0" height="43.7" fill="#8a7f78" /><rect x="806.7" y="632.8" width="1.4" height="43.7" fill="#45372f" /><rect x="809.4" y="632.8" width="1.0" height="43.7" fill="#8a7f78" /><rect x="812.1" y="632.8" width="1.4" height="43.7" fill="#45372f" /><rect x="814.8" y="632.8" width="1.0" height="43.7" fill="#8a7f78" /><rect x="817.5" y="632.8" width="1.4" height="43.7" fill="#45372f" /><rect x="820.2" y="632.8" width="1.0" height="43.7" fill="#8a7f78" /><rect x="822.9" y="632.8" width="1.4" height="43.7" fill="#45372f" /><rect x="766.4" y="635.0" width="25.4" height="31.0" fill="#1b1a1a" /><rect x="768.8" y="637.4" width="9.1" height="26.2" fill="#a39a92" /><rect x="768.8" y="637.4" width="4.1" height="26.2" fill="#736d68" /><rect x="774.4" y="637.4" width="0.9" height="26.2" fill="#c2bbb4" /><rect x="780.3" y="637.4" width="9.1" height="26.2" fill="#aaa29b" /><rect x="825.0" y="635.0" width="26.5" height="31.0" fill="#1b1a1a" /><rect x="827.4" y="637.4" width="9.6" height="26.2" fill="#a39a92" /><rect x="827.4" y="637.4" width="4.3" height="26.2" fill="#736d68" /><rect x="833.4" y="637.4" width="1.0" height="26.2" fill="#c2bbb4" /><rect x="839.5" y="637.4" width="9.6" height="26.2" fill="#aaa29b" /><rect x="832.2" y="644.4" width="4.8" height="19.2" fill="#c9c4bf" /><rect x="839.5" y="644.4" width="9.6" height="19.2" fill="#bdb8b3" /><rect x="831.7" y="643.4" width="17.4" height="1.5" fill="#6f6a66" /><rect x="753.0" y="695.8" width="13.4" height="43.7" fill="#1e1b1a" /><rect x="754.2" y="695.8" width="1.0" height="43.7" fill="#8a7f78" /><rect x="756.9" y="695.8" width="1.4" height="43.7" fill="#45372f" /><rect x="759.6" y="695.8" width="1.0" height="43.7" fill="#8a7f78" /><rect x="762.3" y="695.8" width="1.4" height="43.7" fill="#45372f" /><rect x="765.0" y="695.8" width="1.0" height="43.7" fill="#8a7f78" /><rect x="792.0" y="695.8" width="33.0" height="43.7" fill="#1e1b1a" /><rect x="793.2" y="695.8" width="1.0" height="43.7" fill="#8a7f78" /><rect x="795.9" y="695.8" width="1.4" height="43.7" fill="#45372f" /><rect x="798.6" y="695.8" width="1.0" height="43.7" fill="#8a7f78" /><rect x="801.3" y="695.8" width="1.4" height="43.7" fill="#45372f" /><rect x="804.0" y="695.8" width="1.0" height="43.7" fill="#8a7f78" /><rect x="806.7" y="695.8" width="1.4" height="43.7" fill="#45372f" /><rect x="809.4" y="695.8" width="1.0" height="43.7" fill="#8a7f78" /><rect x="812.1" y="695.8" width="1.4" height="43.7" fill="#45372f" /><rect x="814.8" y="695.8" width="1.0" height="43.7" fill="#8a7f78" /><rect x="817.5" y="695.8" width="1.4" height="43.7" fill="#45372f" /><rect x="820.2" y="695.8" width="1.0" height="43.7" fill="#8a7f78" /><rect x="822.9" y="695.8" width="1.4" height="43.7" fill="#45372f" /><rect x="766.4" y="698.0" width="25.4" height="31.0" fill="#1b1a1a" /><rect x="768.8" y="700.4" width="9.1" height="26.2" fill="#a39a92" /><rect x="768.8" y="700.4" width="4.1" height="26.2" fill="#736d68" /><rect x="774.4" y="700.4" width="0.9" height="26.2" fill="#c2bbb4" /><rect x="780.3" y="700.4" width="9.1" height="26.2" fill="#aaa29b" /><rect x="825.0" y="698.0" width="26.5" height="31.0" fill="#1b1a1a" /><rect x="827.4" y="700.4" width="9.6" height="26.2" fill="#a39a92" /><rect x="827.4" y="700.4" width="4.3" height="26.2" fill="#736d68" /><rect x="833.4" y="700.4" width="1.0" height="26.2" fill="#c2bbb4" /><rect x="839.5" y="700.4" width="9.6" height="26.2" fill="#aaa29b" /><rect x="832.2" y="707.4" width="4.8" height="19.2" fill="#c9c4bf" /><rect x="839.5" y="707.4" width="9.6" height="19.2" fill="#bdb8b3" /><rect x="831.7" y="706.4" width="17.4" height="1.5" fill="#6f6a66" /><rect x="748.0" y="423.5" width="126.0" height="21.3" fill="#1b1a1a" /><rect x="748.0" y="424.5" width="126.0" height="19.3" fill="#767673" /><rect x="750.0" y="429.4" width="67.0" height="8.0" fill="#1b1a1a" /><rect x="751.0" y="430.4" width="65.0" height="2.5" fill="#6e625b" /><rect x="753.0" y="433.9" width="63.0" height="2.5" fill="#6e625b" /><rect x="748.0" y="486.5" width="126.0" height="21.3" fill="#1b1a1a" /><rect x="748.0" y="487.5" width="126.0" height="19.3" fill="#767673" /><rect x="750.0" y="492.4" width="67.0" height="8.0" fill="#1b1a1a" /><rect x="751.0" y="493.4" width="65.0" height="2.5" fill="#6e625b" /><rect x="753.0" y="496.9" width="63.0" height="2.5" fill="#6e625b" /><rect x="748.0" y="549.5" width="126.0" height="21.3" fill="#1b1a1a" /><rect x="748.0" y="550.5" width="126.0" height="19.3" fill="#767673" /><rect x="750.0" y="555.4" width="67.0" height="8.0" fill="#1b1a1a" /><rect x="751.0" y="556.4" width="65.0" height="2.5" fill="#6e625b" /><rect x="753.0" y="559.9" width="63.0" height="2.5" fill="#6e625b" /><rect x="748.0" y="612.5" width="126.0" height="21.3" fill="#1b1a1a" /><rect x="748.0" y="613.5" width="126.0" height="19.3" fill="#767673" /><rect x="750.0" y="618.4" width="67.0" height="8.0" fill="#1b1a1a" /><rect x="751.0" y="619.4" width="65.0" height="2.5" fill="#6e625b" /><rect x="753.0" y="622.9" width="63.0" height="2.5" fill="#6e625b" /><rect x="748.0" y="675.5" width="126.0" height="21.3" fill="#1b1a1a" /><rect x="748.0" y="676.5" width="126.0" height="19.3" fill="#767673" /><rect x="750.0" y="681.4" width="67.0" height="8.0" fill="#1b1a1a" /><rect x="751.0" y="682.4" width="65.0" height="2.5" fill="#6e625b" /><rect x="753.0" y="685.9" width="63.0" height="2.5" fill="#6e625b" /><rect x="748.0" y="739.0" width="126.0" height="13.0" fill="#1b1a1a" /><rect x="748.0" y="740.0" width="126.0" height="11.0" fill="#767673" /><path d="M754.0 357.5 L874.0 357.0 L874.0 377.0 L746.5 378.0 L746.5 364.0 L754.0 364.0Z" fill="#1b1a1a" /><path d="M754.0 358.0 L874.0 357.0 L874.0 364.0 L754.0 366.0Z" fill="#6f645d" /><path d="M746.0 366.0 L874.0 364.0 L874.0 371.0 L746.0 372.0Z" fill="#6f645d" /><path d="M874.0 370.0 L991.0 392.0 L991.0 772.0 L874.0 752.0Z" fill="#1f1b19" /><path d="M874.0 425.0 L991.0 445.0 L991.0 463.0 L874.0 443.0Z" fill="#21201f" /><path d="M874.0 488.0 L991.0 508.0 L991.0 526.0 L874.0 506.0Z" fill="#21201f" /><path d="M874.0 551.0 L991.0 571.0 L991.0 589.0 L874.0 569.0Z" fill="#21201f" /><path d="M874.0 614.0 L991.0 634.0 L991.0 652.0 L874.0 632.0Z" fill="#21201f" /><path d="M874.0 677.0 L991.0 697.0 L991.0 715.0 L874.0 695.0Z" fill="#21201f" /><path d="M874.0 740.0 L991.0 760.0 L991.0 778.0 L874.0 758.0Z" fill="#21201f" /><rect x="907.0" y="375.0" width="23.0" height="382.0" fill="#7c7169" /><rect x="908.0" y="388.5" width="15.4" height="32.0" fill="#1b1a1a" /><rect x="910.2" y="390.7" width="11.0" height="27.6" fill="#a39a92" /><rect x="908.0" y="451.5" width="15.4" height="32.0" fill="#1b1a1a" /><rect x="910.2" y="453.7" width="11.0" height="27.6" fill="#a39a92" /><rect x="908.0" y="514.5" width="15.4" height="32.0" fill="#1b1a1a" /><rect x="910.2" y="516.7" width="11.0" height="27.6" fill="#a39a92" /><rect x="908.0" y="577.5" width="15.4" height="32.0" fill="#1b1a1a" /><rect x="910.2" y="579.7" width="11.0" height="27.6" fill="#a39a92" /><rect x="908.0" y="640.5" width="15.4" height="32.0" fill="#1b1a1a" /><rect x="910.2" y="642.7" width="11.0" height="27.6" fill="#a39a92" /><rect x="908.0" y="703.5" width="15.4" height="32.0" fill="#1b1a1a" /><rect x="910.2" y="705.7" width="11.0" height="27.6" fill="#a39a92" /><rect x="907.0" y="430.0" width="23.0" height="20.0" fill="#1b1a1a" /><rect x="907.0" y="431.0" width="23.0" height="18.0" fill="#767673" /><rect x="907.0" y="493.0" width="23.0" height="20.0" fill="#1b1a1a" /><rect x="907.0" y="494.0" width="23.0" height="18.0" fill="#767673" /><rect x="907.0" y="556.0" width="23.0" height="20.0" fill="#1b1a1a" /><rect x="907.0" y="557.0" width="23.0" height="18.0" fill="#767673" /><rect x="907.0" y="619.0" width="23.0" height="20.0" fill="#1b1a1a" /><rect x="907.0" y="620.0" width="23.0" height="18.0" fill="#767673" /><rect x="907.0" y="682.0" width="23.0" height="20.0" fill="#1b1a1a" /><rect x="907.0" y="683.0" width="23.0" height="18.0" fill="#767673" /><rect x="907.0" y="745.0" width="23.0" height="13.0" fill="#1b1a1a" /><rect x="907.0" y="746.0" width="23.0" height="11.0" fill="#767673" /><rect x="895.5" y="388.0" width="1.0" height="32.0" fill="#6e655f" /><rect x="898.0" y="388.0" width="1.0" height="32.0" fill="#8a8079" /><rect x="895.5" y="451.0" width="1.0" height="32.0" fill="#6e655f" /><rect x="898.0" y="451.0" width="1.0" height="32.0" fill="#8a8079" /><rect x="895.5" y="514.0" width="1.0" height="32.0" fill="#6e655f" /><rect x="898.0" y="514.0" width="1.0" height="32.0" fill="#8a8079" /><rect x="895.5" y="577.0" width="1.0" height="32.0" fill="#6e655f" /><rect x="898.0" y="577.0" width="1.0" height="32.0" fill="#8a8079" /><rect x="895.5" y="640.0" width="1.0" height="32.0" fill="#6e655f" /><rect x="898.0" y="640.0" width="1.0" height="32.0" fill="#8a8079" /><rect x="895.5" y="703.0" width="1.0" height="32.0" fill="#6e655f" /><rect x="898.0" y="703.0" width="1.0" height="32.0" fill="#8a8079" /><path d="M872.0 357.0 L1012.0 383.0 L1012.0 396.0 L990.0 397.0 L874.0 375.0Z" fill="#161413" /><path d="M872.0 357.0 L950.0 371.0 L1012.0 383.0 L1012.0 386.0 L874.0 362.0Z" fill="#2a2522" /><path d="M925.0 366.0 L948.0 369.0 L948.0 374.0 L925.0 371.0Z" fill="#6f645d" /><path d="M874 359 L925 367" stroke="#6f645d" stroke-width="1.5"/><rect x="277.5" y="660.0" width="147.5" height="91.4" fill="#7c7169" /><rect x="276.5" y="660.0" width="1.5" height="91.4" fill="#1b1a1a" /><rect x="403.2" y="658.0" width="21.8" height="96.4" fill="#1f1b19" /><rect x="414.2" y="676.0" width="4.5" height="78.4" fill="#6f655e" /><rect x="415.2" y="677.0" width="2.5" height="77.4" fill="#8a7f77" /><rect x="295.0" y="674.0" width="90.3" height="1.5" fill="#1b1a1a" /><rect x="294.5" y="674.0" width="1.5" height="75.4" fill="#1b1a1a" /><rect x="384.3" y="674.0" width="1.5" height="75.4" fill="#1b1a1a" /><rect x="296.0" y="675.5" width="88.3" height="72.9" fill="#6f655e" /><rect x="299.0" y="678.0" width="1.2" height="70.4" fill="#1b1a1a" /><rect x="380.8" y="678.0" width="1.2" height="70.4" fill="#1b1a1a" /><rect x="300.0" y="678.0" width="80.8" height="1.2" fill="#1b1a1a" /><path d="M300.5 679.5 L380.3 679.5 L376.7 687.0 L309.7 687.0Z" fill="#5e554f" /><rect x="308.7" y="686.0" width="69.0" height="61.4" fill="#1b1a1a" /><rect x="311.2" y="689.0" width="11.9" height="56.4" fill="#a79e96" /><rect x="325.1" y="689.0" width="11.4" height="56.4" fill="#6f6b67" /><rect x="337.8" y="689.0" width="10.7" height="56.4" fill="#77726d" /><rect x="350.6" y="689.0" width="24.6" height="56.4" fill="#a8a4a0" /><rect x="335.2" y="691.0" width="9.4" height="10.0" fill="#a39e98" /><rect x="333.8" y="742.4" width="39.9" height="2.5" fill="#d9d6d3" /><rect x="335.6" y="736.8" width="38.1" height="2.5" fill="#d9d6d3" /><rect x="337.4" y="731.2" width="36.3" height="2.5" fill="#d9d6d3" /><rect x="339.2" y="725.6" width="34.5" height="2.5" fill="#d9d6d3" /><rect x="341.0" y="720.0" width="32.7" height="2.5" fill="#d9d6d3" /><rect x="342.8" y="714.4" width="30.9" height="2.5" fill="#d9d6d3" /><rect x="344.6" y="708.8" width="29.1" height="2.5" fill="#d9d6d3" /><rect x="346.4" y="703.2" width="27.3" height="2.5" fill="#d9d6d3" /><rect x="348.2" y="697.6" width="25.5" height="2.5" fill="#d9d6d3" /><rect x="324.4" y="689.0" width="0.7" height="56.4" fill="#1b1a1a" /><rect x="348.6" y="689.0" width="2.0" height="56.4" fill="#1b1a1a" /><rect x="336.5" y="689.0" width="1.3" height="56.4" fill="#1b1a1a" /><rect x="265.5" y="751.4" width="161.5" height="8.0" fill="#121110" /><rect x="287.0" y="747.4" width="91.3" height="4.0" fill="#7d736c" stroke="#1b1a1a" stroke-width="1"/><path d="M267.0 649.0 L421.0 650.0 L436.0 653.0 L436.0 659.0 L406.0 656.0 L267.0 655.0Z" fill="#1b1a1a" /><rect x="272.0" y="655.0" width="133.0" height="5.0" fill="#6f645d" /><rect x="272.0" y="657.0" width="133.0" height="1.0" fill="#1b1a1a" /><rect x="277.0" y="660.0" width="128.0" height="2.0" fill="#1b1a1a" /><path d="M405.0 655.0 L436.0 658.0 L426.0 664.0 L405.0 662.0Z" fill="#1f1b19" /><rect x="624.4" y="653.0" width="148.6" height="96.4" fill="#7c7169" /><rect x="623.4" y="653.0" width="1.5" height="96.4" fill="#1b1a1a" /><rect x="751.0" y="651.0" width="22.0" height="101.4" fill="#1f1b19" /><rect x="762.0" y="669.0" width="4.5" height="83.4" fill="#6f655e" /><rect x="763.0" y="670.0" width="2.5" height="82.4" fill="#8a7f77" /><rect x="641.8" y="667.0" width="91.9" height="1.5" fill="#1b1a1a" /><rect x="641.3" y="667.0" width="1.5" height="80.4" fill="#1b1a1a" /><rect x="732.7" y="667.0" width="1.5" height="80.4" fill="#1b1a1a" /><rect x="642.8" y="668.5" width="89.9" height="77.9" fill="#6f655e" /><rect x="645.8" y="671.0" width="1.2" height="75.4" fill="#1b1a1a" /><rect x="729.2" y="671.0" width="1.2" height="75.4" fill="#1b1a1a" /><rect x="646.8" y="671.0" width="82.4" height="1.2" fill="#1b1a1a" /><path d="M647.3 672.5 L728.7 672.5 L724.2 683.0 L656.0 683.0Z" fill="#5e554f" /><rect x="655.0" y="682.0" width="70.2" height="63.4" fill="#1b1a1a" /><rect x="657.5" y="685.0" width="12.1" height="58.4" fill="#a79e96" /><rect x="671.7" y="685.0" width="11.6" height="58.4" fill="#6f6b67" /><rect x="684.6" y="685.0" width="10.9" height="58.4" fill="#77726d" /><rect x="697.6" y="685.0" width="25.1" height="58.4" fill="#a8a4a0" /><rect x="681.9" y="687.0" width="9.5" height="10.0" fill="#a39e98" /><rect x="680.6" y="740.4" width="40.6" height="2.5" fill="#d9d6d3" /><rect x="682.4" y="734.8" width="38.8" height="2.5" fill="#d9d6d3" /><rect x="684.2" y="729.2" width="37.0" height="2.5" fill="#d9d6d3" /><rect x="686.0" y="723.6" width="35.2" height="2.5" fill="#d9d6d3" /><rect x="687.8" y="718.0" width="33.4" height="2.5" fill="#d9d6d3" /><rect x="689.6" y="712.4" width="31.6" height="2.5" fill="#d9d6d3" /><rect x="691.4" y="706.8" width="29.8" height="2.5" fill="#d9d6d3" /><rect x="693.2" y="701.2" width="28.0" height="2.5" fill="#d9d6d3" /><rect x="695.0" y="695.6" width="26.2" height="2.5" fill="#d9d6d3" /><rect x="671.0" y="685.0" width="0.7" height="58.4" fill="#1b1a1a" /><rect x="695.6" y="685.0" width="2.0" height="58.4" fill="#1b1a1a" /><rect x="683.3" y="685.0" width="1.4" height="58.4" fill="#1b1a1a" /><rect x="612.4" y="749.4" width="162.6" height="8.0" fill="#121110" /><rect x="633.8" y="745.4" width="92.9" height="4.0" fill="#7d736c" stroke="#1b1a1a" stroke-width="1"/><path d="M615.0 642.0 L768.0 643.0 L783.0 646.0 L783.0 652.0 L753.0 649.0 L615.0 648.0Z" fill="#1b1a1a" /><rect x="620.0" y="648.0" width="132.0" height="5.0" fill="#6f645d" /><rect x="620.0" y="650.0" width="132.0" height="1.0" fill="#1b1a1a" /><rect x="625.0" y="653.0" width="127.0" height="2.0" fill="#1b1a1a" /><path d="M752.0 648.0 L783.0 651.0 L773.0 657.0 L752.0 655.0Z" fill="#1f1b19" /><rect x="472.6" y="766.0" width="8.0" height="1.5" fill="#6e645d" /><rect x="842.2" y="762.1" width="6.0" height="2.0" fill="#6e645d" /><rect x="391.5" y="767.4" width="6.0" height="1.5" fill="#6e645d" /><rect x="299.4" y="758.4" width="30.0" height="1.5" fill="#5a514b" /><rect x="936.0" y="764.2" width="4.0" height="1.5" fill="#302b28" /><rect x="957.4" y="763.8" width="4.0" height="2.0" fill="#3a3431" /><rect x="543.4" y="769.2" width="6.0" height="2.0" fill="#5a514b" /><rect x="366.3" y="765.9" width="10.0" height="2.0" fill="#5a514b" /><rect x="278.7" y="770.3" width="4.0" height="2.0" fill="#302b28" /><rect x="627.1" y="766.0" width="20.0" height="2.0" fill="#302b28" /><rect x="454.7" y="773.2" width="8.0" height="1.5" fill="#3a3431" /><rect x="658.8" y="773.2" width="45.0" height="2.0" fill="#302b28" /><rect x="684.5" y="759.1" width="6.0" height="1.5" fill="#302b28" /><rect x="794.6" y="771.1" width="8.0" height="1.5" fill="#302b28" /><rect x="946.8" y="766.5" width="6.0" height="2.0" fill="#5a514b" /><rect x="484.7" y="770.4" width="20.0" height="2.0" fill="#5a514b" /><rect x="283.1" y="778.3" width="6.0" height="2.0" fill="#302b28" /><rect x="725.5" y="769.3" width="4.0" height="2.0" fill="#2a2624" /><rect x="661.4" y="762.3" width="45.0" height="2.0" fill="#302b28" /><rect x="489.8" y="765.0" width="45.0" height="1.5" fill="#5a514b" /><rect x="598.8" y="772.4" width="10.0" height="2.0" fill="#3a3431" /><rect x="416.0" y="778.9" width="30.0" height="1.5" fill="#302b28" /><rect x="355.6" y="770.2" width="30.0" height="2.0" fill="#3a3431" /><rect x="873.9" y="766.3" width="14.0" height="2.0" fill="#2a2624" /><rect x="889.0" y="758.9" width="10.0" height="1.5" fill="#3a3431" /><rect x="404.3" y="757.3" width="10.0" height="1.5" fill="#5a514b" /><rect x="427.2" y="760.4" width="4.0" height="2.0" fill="#5a514b" /><rect x="685.1" y="774.0" width="20.0" height="2.0" fill="#5a514b" /><rect x="718.6" y="764.8" width="4.0" height="2.0" fill="#5a514b" /><rect x="527.8" y="759.2" width="30.0" height="1.5" fill="#302b28" /><rect x="373.6" y="767.6" width="10.0" height="2.0" fill="#6e645d" /><rect x="678.3" y="757.0" width="6.0" height="2.0" fill="#3a3431" /><rect x="307.4" y="771.7" width="20.0" height="1.5" fill="#6e645d" /><rect x="688.3" y="768.3" width="8.0" height="2.0" fill="#2a2624" /><rect x="502.6" y="759.6" width="6.0" height="2.0" fill="#302b28" /><rect x="588.9" y="758.7" width="14.0" height="2.0" fill="#6e645d" /><rect x="486.6" y="767.8" width="14.0" height="2.0" fill="#3a3431" /><rect x="249.2" y="759.1" width="20.0" height="1.5" fill="#5a514b" /><rect x="795.3" y="771.8" width="14.0" height="2.0" fill="#6e645d" /><rect x="860.2" y="769.3" width="20.0" height="1.5" fill="#2a2624" /><rect x="627.7" y="769.3" width="20.0" height="1.5" fill="#5a514b" /><rect x="830.9" y="767.5" width="30.0" height="1.5" fill="#3a3431" /><rect x="616.6" y="771.3" width="20.0" height="2.0" fill="#6e645d" /><rect x="582.9" y="771.1" width="10.0" height="2.0" fill="#2a2624" /><rect x="832.8" y="770.5" width="20.0" height="1.5" fill="#2a2624" /><rect x="395.8" y="768.3" width="10.0" height="1.5" fill="#2a2624" /><rect x="590.6" y="766.7" width="4.0" height="2.0" fill="#2a2624" /><rect x="295.0" y="778.8" width="6.0" height="2.0" fill="#3a3431" /><rect x="892.5" y="767.2" width="30.0" height="1.5" fill="#2a2624" /><rect x="827.0" y="763.6" width="30.0" height="2.0" fill="#6e645d" /><rect x="350.0" y="757.7" width="8.0" height="2.0" fill="#5a514b" /><rect x="831.2" y="765.7" width="8.0" height="2.0" fill="#5a514b" /><rect x="720.4" y="759.6" width="20.0" height="1.5" fill="#5a514b" /><rect x="247.9" y="764.5" width="6.0" height="2.0" fill="#3a3431" /><rect x="965.0" y="767.1" width="10.0" height="1.5" fill="#3a3431" /><rect x="419.1" y="768.9" width="14.0" height="2.0" fill="#5a514b" /><rect x="424.7" y="776.8" width="30.0" height="2.0" fill="#6e645d" /><rect x="494.9" y="771.8" width="45.0" height="2.0" fill="#5a514b" /><rect x="846.6" y="764.4" width="8.0" height="2.0" fill="#5a514b" /><rect x="245.9" y="767.7" width="45.0" height="1.5" fill="#5a514b" /><rect x="232.0" y="758.0" width="68.0" height="3.0" fill="#6b615b" /><rect x="916.0" y="768.5" width="74.0" height="1.5" fill="#5e5550" /><rect x="271.0" y="754.0" width="62.0" height="8.0" fill="#1b1a1a" /><rect x="272.0" y="755.0" width="60.0" height="2.5" fill="#6e625b" /><rect x="274.0" y="758.5" width="58.0" height="2.5" fill="#6e625b" /><rect x="402.0" y="749.0" width="69.0" height="8.0" fill="#1b1a1a" /><rect x="403.0" y="750.0" width="67.0" height="2.5" fill="#6e625b" /><rect x="405.0" y="753.5" width="65.0" height="2.5" fill="#6e625b" /><rect x="750.0" y="744.0" width="67.0" height="8.0" fill="#1b1a1a" /><rect x="751.0" y="745.0" width="65.0" height="2.5" fill="#6e625b" /><rect x="753.0" y="748.5" width="63.0" height="2.5" fill="#6e625b" /></svg><!--/BLD-->
<div class="panel" style="left:1016px;top:162px;width:338px;height:194px"></div>
<div class="lbl" style="left:1025px;top:168px;color:#4a525c">通用工具</div>
<svg class="a" style="left:0;top:0" width="1357" height="340"><g transform="translate(1050.5,224.5)"><path d="M-9.5 0 H9.5 M0 -9.5 V9.5 M-6.5 -3 L-9.5 0 L-6.5 3 M6.5 -3 L9.5 0 L6.5 3 M-3 -6.5 L0 -9.5 L3 -6.5 M-3 6.5 L0 9.5 L3 6.5" fill="none" stroke="#34495e" stroke-width="1.3"/><circle r="1.2" fill="#d7e0e7" stroke="#34495e" stroke-width="0.8"/></g><g transform="translate(1088.7,224.5)"><rect x="-5" y="-6" width="15.5" height="16" rx="1" fill="#7f95a8" stroke="#34495e" stroke-width="1.2"/><rect x="-8.5" y="-9" width="15.5" height="16" rx="1" fill="#fff" stroke="#34495e" stroke-width="1.3"/><path d="M-4.5 -1 H3 M-0.7 -4.8 V2.8" stroke="#34495e" stroke-width="1.2"/></g><g transform="translate(1127,224.5)"><path d="M8 -2 A9 9 0 1 0 6 6.5" fill="none" stroke="#34495e" stroke-width="1.3"/><path d="M5.5 -1.5 L8.5 1.5 L11.5 -2" fill="none" stroke="#34495e" stroke-width="1.3"/><path d="M-4.5 0 L-1.5 -3 L1.5 0 L-1.5 3Z" fill="#7f95a8" stroke="#34495e" stroke-width="1"/></g><g transform="translate(1165,224.5)"><path d="M-9.5 -2 H1.5 V10 H-2.5 V2 H-9.5Z" fill="#7f95a8" stroke="#34495e" stroke-width="1"/><path d="M-2 -10 V-4 M1.5 -10 V-4 M4 -2 H10 M4 2 H10" stroke="#7f95a8" stroke-width="1"/></g><g transform="translate(1203,224.5)"><path d="M-10 -2 H-2 V2 H-10Z M2 -2 H10.5 V2 H2Z" fill="#7f95a8" stroke="#34495e" stroke-width="1"/><path d="M0 -10 V10" stroke="#7f95a8" stroke-width="1.2"/></g><g transform="translate(1241,224.5)"><path d="M-10 -2 H-3 V2 H-10Z M3 -2 H10.5 V2 H3Z" fill="#7f95a8" stroke="#34495e" stroke-width="1"/><rect x="-2.2" y="-9.5" width="4.4" height="19" rx="1" fill="#d7e0e7" stroke="#34495e" stroke-width="1.1"/></g><g transform="translate(1279,224.5)"><path d="M-8.5 -8.5 H1 V-3 H8.5 V8.5 H-2 V3 H-8.5Z" fill="#fff" stroke="#7f95a8" stroke-width="3.2" stroke-linejoin="round"/><path d="M-8.5 -8.5 H1 V-3 H8.5 V8.5 H-2 V3 H-8.5Z" fill="#fff" stroke="#34495e" stroke-width="1.2" stroke-linejoin="round"/></g><g transform="translate(1050.5,262.5)"><rect x="-3.2" y="-7" width="10.5" height="5.8" rx="1" fill="#7f95a8" stroke="#34495e" stroke-width="1.1"/><rect x="-8.5" y="2" width="15.8" height="6" rx="1" fill="#d7e0e7" stroke="#34495e" stroke-width="1.1"/><path d="M9.9 -10 V10" stroke="#34495e" stroke-width="1.3"/></g><g transform="translate(1088.7,262.5)"><rect x="-10" y="-2.5" width="10.5" height="5.5" rx="1" fill="#7f95a8" stroke="#34495e" stroke-width="1.1"/><path d="M2.5 -2.5 H8 M2.5 2.5 H8" stroke="#7f95a8" stroke-width="1"/><path d="M9.9 -10 V10" stroke="#34495e" stroke-width="1.3"/></g><g transform="translate(1127,262.5)"><rect x="-10" y="-2.5" width="10.5" height="5.5" rx="1" fill="#7f95a8" stroke="#34495e" stroke-width="1.1"/><path d="M4 -2.5 H10.5 M4 2.5 H10.5" stroke="#a6b5c3" stroke-width="1"/><path d="M2.4 -10 V10" stroke="#34495e" stroke-width="1.3"/></g><g transform="translate(1165,262.5)"><rect x="-9.5" y="3.5" width="6.5" height="6.5" rx="1" fill="#7f95a8" stroke="#34495e" stroke-width="1.1"/><rect x="-3" y="-3" width="6" height="6" rx="1" fill="#d7e0e7" stroke="#34495e" stroke-width="1.1"/><rect x="3.5" y="-10" width="6" height="6" rx="1" fill="#d7e0e7" stroke="#34495e" stroke-width="1.1"/></g><g transform="translate(1203,262.5)"><rect x="-2.5" y="-10" width="5" height="5" rx="0.8" fill="#d7e0e7" stroke="#34495e" stroke-width="1.1"/><rect x="-9.5" y="-6" width="5" height="5" rx="0.8" fill="#d7e0e7" stroke="#34495e" stroke-width="1.1"/><rect x="4.5" y="-6" width="5" height="5" rx="0.8" fill="#d7e0e7" stroke="#34495e" stroke-width="1.1"/><rect x="-9.5" y="1" width="5" height="5" rx="0.8" fill="#d7e0e7" stroke="#34495e" stroke-width="1.1"/><rect x="4.5" y="1" width="5" height="5" rx="0.8" fill="#d7e0e7" stroke="#34495e" stroke-width="1.1"/><rect x="-2.5" y="5" width="5" height="5" rx="0.8" fill="#7f95a8" stroke="#34495e" stroke-width="1.1"/></g><g transform="translate(1241,262.5)"><path d="M-10 -6 L-3 0 L-10 6Z" fill="#d7e0e7" stroke="#34495e" stroke-width="1.1" stroke-linejoin="round"/><path d="M10 -6 L3 0 L10 6Z" fill="#7f95a8" stroke="#34495e" stroke-width="1.1" stroke-linejoin="round"/><path d="M0 -10 V10" stroke="#7f95a8" stroke-width="1.2"/></g><g transform="translate(1279,262.5)"><rect x="-8.5" y="-6.5" width="17" height="3" rx="1" fill="#d7e0e7" stroke="#34495e" stroke-width="1.1"/><rect x="-2.5" y="-9" width="5" height="2.5" rx="0.8" fill="#d7e0e7" stroke="#34495e" stroke-width="1"/><path d="M-7 -3.5 H7 L6.5 10 H-6.5Z" fill="#7f95a8" stroke="#34495e" stroke-width="1.1"/><path d="M-3.5 -1.5 V8 M-1.2 -1.5 V8 M1.2 -1.5 V8 M3.5 -1.5 V8" stroke="#a6b5c3" stroke-width="0.8"/></g><g transform="translate(1050.5,300.5)"><rect x="-10" y="-5" width="16.5" height="5" rx="1" fill="#d7e0e7" stroke="#34495e" stroke-width="1.1"/><path d="M-3 -8 H5.5 L4.5 -9" fill="none" stroke="#1e88e5" stroke-width="1.1"/><rect x="1" y="2" width="4.5" height="9" rx="0.8" fill="#d7e0e7" stroke="#1e88e5" stroke-width="1.2"/><path d="M8 1 V8 L9.5 6.5" fill="none" stroke="#1e88e5" stroke-width="1.1"/></g><g transform="translate(1088.7,300.5)"><rect x="-9" y="-5" width="19" height="8.5" rx="1" fill="#d7e0e7" stroke="#34495e" stroke-width="1.2"/><path d="M-6.5 3 V-1.5 M-3.5 3 V0.5 M-0.5 3 V-2 M2.5 3 V0.5 M5.5 3 V-1.5" stroke="#34495e" stroke-width="1"/><path d="M-9 7 H10 M-9 5.5 V8.5 M10 5.5 V8.5" stroke="#34495e" stroke-width="1.1"/></g></svg>
<div class="panel" style="left:1016px;top:360px;width:338px;height:689px"></div>
<div class="lbl" style="left:1025px;top:366px;color:#4a525c">属性面板</div>
<div class="a" style="left:1028px;top:387px;width:288px;height:50px;background:#f7f8fa;border:1px solid #cfd6e0;border-radius:3px"></div>
<svg class="a" style="left:1030px;top:394px" width="34" height="36" stroke="#d6dade" fill="none" stroke-width="0.8">
<path d="M6 7 L17 2 L27 7 L27 22 L16 28 L5 22Z M6 7 L15 12 L27 7 M15 12 L16 28 M5 22 L12 17 L27 22 M12 17 L17 2"/>
<circle cx="6" cy="7" r="1.4" fill="#f7f8fa"/><circle cx="17" cy="2" r="1.4" fill="#f7f8fa"/><circle cx="27" cy="7" r="1.4" fill="#f7f8fa"/><circle cx="27" cy="22" r="1.4" fill="#f7f8fa"/><circle cx="16" cy="28" r="1.4" fill="#f7f8fa"/><circle cx="5" cy="22" r="1.4" fill="#f7f8fa"/><circle cx="15" cy="12" r="1.4" fill="#f7f8fa"/>
</svg>
<div class="lbl" style="left:1070px;top:397px;color:#a9aeb5;line-height:14px">视图名称<br>三维视图</div>
<svg class="a" style="left:1300px;top:400px" width="16" height="20"><path d="M4.5 9 L8 12.5 L11.5 9" fill="none" stroke="#6b7580" stroke-width="1.2"/></svg>
<div class="a" style="left:1318px;top:387px;width:24px;height:24px;background:#f7f8fa;border:1px solid #cfd6e0;border-radius:3px"></div>
<div class="a" style="left:1318px;top:413px;width:24px;height:24px;background:#f7f8fa;border:1px solid #cfd6e0;border-radius:3px"></div>
<svg class="a" style="left:1318px;top:387px" width="24" height="50" stroke="#5f6a75" fill="none">
<path d="M12 5.5 V17.5 M6 11.5 H18" stroke-width="1.4"/>
<path d="M6.5 32.5 H17.5 M6.5 36 H17.5 M6.5 39.5 H17.5" stroke-width="1.1"/>
<path d="M14 31 V34 M10 34.5 V37.5 M14 38 V41" stroke-width="1.1"/>
</svg>
<svg class="a" style="left:1028px;top:452px" width="80" height="205" fill="none" stroke="#5f6a75" stroke-width="1.2">
<path d="M3.5 5 L7 8.5 L10.5 5"/>
<path d="M3.5 194.5 L7 198 L10.5 194.5"/>
</svg>
<div class="lbl" style="left:1047px;top:452px;color:#6b737c">基本属性</div>
<div class="lbl" style="left:1027px;top:481px">视图名称</div>
<div class="lbl" style="left:1027px;top:512px">视图比例</div>
<div class="lbl" style="left:1027px;top:544px">显示模式</div>
<div class="lbl" style="left:1027px;top:575px">工作平面</div>
<div class="lbl" style="left:1027px;top:607px">视图对象样式</div>
<div class="lbl" style="left:1047px;top:641px;color:#6b737c">视图范围</div>
<div class="lbl" style="left:1027px;top:670px">剖切框</div>
<div class="inp" style="top:476px">三维</div>
<div class="inp" style="top:507px">1:100</div>
<div class="inp" style="top:539px">材质模式</div>
<div class="inp" style="top:570px">室外地坪F</div>
<div class="inp" style="top:602px;text-align:center;padding-left:0">设置</div>
<svg class="a" style="left:1320px;top:500px" width="24" height="100" fill="none" stroke="#3d4650" stroke-width="1.3">
<path d="M9.5 17 L13 20.5 L16.5 17"/>
<path d="M9.5 49 L13 52.5 L16.5 49"/>
<path d="M9.5 80 L13 83.5 L16.5 80"/>
</svg>
<div class="a" style="left:1111px;top:669px;width:16px;height:16px;background:#fff;border:1px solid #cfd6e0;border-radius:2px"></div>

<!-- STATUS -->
<div id="status" class="a"></div>
<div class="a" style="left:110px;top:1053px;width:2px;height:23px;background:#d3d9e2"></div>
<div class="a" style="left:1157px;top:1053px;width:2px;height:23px;background:#d3d9e2"></div>
<div class="a" style="left:1228px;top:1053px;width:2px;height:23px;background:#d3d9e2"></div>
<div class="a" style="left:0;top:1076px;width:1357px;height:2px;background:#d3d9e2"></div>
<svg class="a" style="left:0;top:1052px" width="1357" height="26" stroke-width="1.1">
<g transform="translate(27.5,12.5)"><rect x="-7" y="-7" width="6" height="6" rx="1" fill="#9aa2ab" stroke="#4d5660"/><rect x="1" y="-7" width="6" height="6" rx="1" fill="#9aa2ab" stroke="#4d5660"/><rect x="1" y="1" width="6" height="6" rx="1" fill="#9aa2ab" stroke="#4d5660"/><path d="M-7 3 V7 H-3 M-1 1 H-1" fill="none" stroke="#4d5660" stroke-dasharray="1.5 1.2"/></g>
<g transform="translate(59.5,12.5)"><rect x="-7" y="-7" width="6" height="6" rx="1" fill="none" stroke="#a9b0b8"/><rect x="1" y="-7" width="6" height="6" rx="1" fill="none" stroke="#a9b0b8"/><rect x="-7" y="1" width="6" height="6" rx="1" fill="#9aa2ab" stroke="#7d858e"/><rect x="1" y="1" width="6" height="6" rx="1" fill="none" stroke="#a9b0b8"/></g>
<g transform="translate(91.5,12.5)"><rect x="-7" y="-7" width="6" height="6" rx="1" fill="#e4e9ee" stroke="#3f5164"/><rect x="1" y="-7" width="6" height="6" rx="1" fill="#e4e9ee" stroke="#3f5164"/><rect x="-7" y="1" width="6" height="6" rx="1" fill="#e4e9ee" stroke="#3f5164"/><path d="M2 3 A3 3 0 1 1 4 7.5 H2.5 M1.5 2 V4 H3.5" fill="none" stroke="#1e88e5" stroke-width="1.2"/></g>
<g transform="translate(1177.5,12.5)"><rect x="-7" y="-6.5" width="6" height="3" fill="#34495e"/><rect x="-7" y="-1.5" width="6" height="3" fill="#34495e"/><rect x="-7" y="3.5" width="6" height="3" fill="#34495e"/><path d="M0.5 -7 V7 M2 -5 H7 M2 0 H7 M2 5 H7" stroke="#34495e" fill="none"/></g>
<g transform="translate(1209.5,12.5)"><path d="M-6 -8 V7 H7" fill="none" stroke="#34495e" stroke-width="1.4"/><rect x="-5.5" y="-1" width="8" height="8" fill="#fff" stroke="#34495e"/></g>
<g transform="translate(1250,12.5)"><circle r="6.5" fill="none" stroke="#4d5660" stroke-width="1.2"/><path d="M-3 4 L0 -4 L3 4 M-1.8 1 H1.8" fill="none" stroke="#4d5660" stroke-width="1.1"/></g>
<g transform="translate(1282,12.5)"><rect x="-7" y="-7" width="14" height="14" rx="1" fill="#e4e9ee" stroke="#34495e" stroke-width="1.2"/><rect x="-7" y="-7" width="14" height="3" fill="#34495e"/><path d="M1.5 7 V4 A2.5 2.5 0 0 1 6.5 4 V7" fill="#fff" stroke="#1e88e5" stroke-width="1.2"/></g>
<g transform="translate(1314,12.5)"><path d="M-6 -4 L-3 -7 H6 V4 L3 7 H-6Z" fill="#b5b5b5" stroke="#555" stroke-width="1.1"/><path d="M-6 -4 H3 V7 M3 -4 L6 -7" fill="none" stroke="#555" stroke-width="1"/></g>
<g transform="translate(1345.5,12.5)"><circle cx="-0.5" cy="-0.5" r="5" fill="none" stroke="#34495e" stroke-width="1.3"/><path d="M-3 -0.5 H2 M-0.5 -3 V2 M3.5 3.5 L6 6" stroke="#34495e" stroke-width="1.3"/><path d="M-7 -4 V-7 H-4 M4 -7 H7 M-7 4 V7 H-4" fill="none" stroke="#34495e" stroke-width="1"/></g>
</svg>
<div class="a" style="left:681px;top:51px;width:119px;height:232px;background:#f7f8fa;border:1px solid #d3d9e2;border-top:none"></div>
<div class="a" style="left:682px;top:215px;width:117px;height:32px;background:#dce2ea"></div>
<svg class="a" style="left:0;top:0" width="810" height="290">
<!-- xianyangshi -->
<path d="M689 62.5 H707 M689 66.5 H707" stroke="#34495e" stroke-width="1" stroke-dasharray="1 1.2"/>
<path d="M689 70.5 H697 M689 74.5 H696 M689 78.5 H697" stroke="#34495e" stroke-width="1" stroke-dasharray="3 1"/>
<path d="M701 66 A7 6.5 0 1 1 700.5 79 Q697 78 699 75 Q701 72.5 697 71.5 Q696.5 67 701 66Z" fill="#c9d3dc" stroke="#34495e" stroke-width="1.2"/>
<circle cx="701" cy="69.5" r="0.9" fill="#34495e"/><circle cx="705" cy="70" r="0.9" fill="#34495e"/><circle cx="706" cy="74" r="0.9" fill="#34495e"/><circle cx="703" cy="76.5" r="0.9" fill="#34495e"/>
<!-- xianxing -->
<path d="M689 94.5 H707" stroke="#34495e" stroke-width="1" stroke-dasharray="1 1.2"/>
<path d="M689 98.5 H707 M689 102.5 H707 M689 106.5 H700 M689 110.5 H698" stroke="#34495e" stroke-width="1" stroke-dasharray="3 1"/>
<path d="M700.5 105 Q699 107 700 109.5 L701.5 111.5 H705.5 L707 109.5 Q708 107 706.5 105 V108 H704.8 L703.5 106.5 L702.2 108 H700.5Z" fill="#d7e9fb" stroke="#1e88e5" stroke-width="1.3"/>
<!-- text style -->
<path d="M689.5 127.5 H703.5 V131 H701.5 L700.5 130 H698 V140.5 H699.5 V142.5 H693.5 V140.5 H695 V130 H692.5 L691.5 131 H689.5Z" fill="#e4e9ee" stroke="#34495e" stroke-width="1.1"/>
<path d="M699.5 134.5 H706.5 V137 H704.3 V141 H705 V142.5 H701.5 V141 H702 V137 H699.5Z" fill="#a9bccb" stroke="#34495e" stroke-width="1"/>
<!-- DWG -->
<path d="M700 157.5 H688.5 V170.5 H700 M706 163 V168" fill="none" stroke="#34495e" stroke-width="1.2"/>
<path d="M702 157.5 H707 V162 M707 157.5 L703 161.5" fill="none" stroke="#1e88e5" stroke-width="1.2"/>
<text x="690" y="167.8" font-family="Liberation Sans" font-size="9.5" font-weight="bold" fill="#34495e" textLength="15.5" lengthAdjust="spacingAndGlyphs">DWG</text>
<circle cx="704.5" cy="173" r="4.2" fill="#fff" stroke="#1e88e5" stroke-width="2.2" stroke-dasharray="1.6 1.3"/><circle cx="704.5" cy="173" r="3.2" fill="#fff" stroke="#1e88e5" stroke-width="1.2"/><circle cx="704.5" cy="173" r="1.2" fill="none" stroke="#1e88e5" stroke-width="0.9"/>
<!-- koujian -->
<path d="M689 196.5 H707 M689 200.5 H707" stroke="#34495e" stroke-width="1.2"/>
<path d="M689 198.5 H707" stroke="#c9d3dc" stroke-width="2.6"/>
<rect x="696" y="190.5" width="4" height="17" rx="0.8" fill="#a9bccb" stroke="#34495e" stroke-width="1.1"/>
<circle cx="703" cy="203" r="4.2" fill="#fff" stroke="#1e88e5" stroke-width="2.2" stroke-dasharray="1.6 1.3"/><circle cx="703" cy="203" r="3.2" fill="#fff" stroke="#1e88e5" stroke-width="1.2"/><circle cx="703" cy="203" r="1.2" fill="none" stroke="#1e88e5" stroke-width="0.9"/>
<!-- material -->
<path d="M689.5 225 Q689.5 222 692.5 222 H704 Q706.5 222 706.5 224.5 V234 Q706.5 236 704.5 236 L700.5 240 H692.5 Q689.5 240 689.5 237Z" fill="#e4e9ee" stroke="#34495e" stroke-width="1.2"/>
<g fill="#b3c1ce"><rect x="691" y="223.5" width="2.6" height="2.6"/><rect x="696.2" y="223.5" width="2.6" height="2.6"/><rect x="701.4" y="223.5" width="2.6" height="2.6"/><rect x="693.6" y="226.1" width="2.6" height="2.6"/><rect x="698.8" y="226.1" width="2.6" height="2.6"/><rect x="704" y="226.1" width="2" height="2.6"/><rect x="691" y="228.7" width="2.6" height="2.6"/><rect x="696.2" y="228.7" width="2.6" height="2.6"/><rect x="701.4" y="228.7" width="2.6" height="2.6"/><rect x="693.6" y="231.3" width="2.6" height="2.6"/><rect x="698.8" y="231.3" width="2.6" height="2.6"/><rect x="691" y="233.9" width="2.6" height="2.6"/><rect x="696.2" y="233.9" width="2.6" height="2.6"/><rect x="693.6" y="236.5" width="2.6" height="2.6"/></g>
<path d="M700.8 234 Q699.5 236 700.3 238.5 L701.3 241 H706 L707 238.5 Q708 236 706.7 234 V236.8 H705.2 L703.7 235.3 L702.2 236.8 H700.8Z" fill="#d7e9fb" stroke="#1e88e5" stroke-width="1.3"/>
</svg>
<div class="lbl" style="left:714px;top:63px">线样式</div>
<div class="lbl" style="left:714px;top:95px">线型</div>
<div class="lbl" style="left:714px;top:127px">文字样式</div>
<div class="lbl" style="left:714px;top:159px;font-size:12.5px">DWG导出设置</div>
<div class="lbl" style="left:714px;top:191px">自定义扣减</div>
<div class="lbl" style="left:714px;top:223px">材料库管理</div>
<div class="a" style="left:686px;top:252px;width:76px;height:25px;background:#fff;border-radius:4px;box-shadow:0 1px 3px rgba(0,0,0,0.08)"></div>
<div class="a" style="left:688px;top:276px;width:70px;height:2px;background:#e6e9ed"></div>
<div class="lbl" style="left:694px;top:256px">材料库管理</div>
<!--EXTRA-->
<svg class="a" style="left:860px;top:225px" width="90" height="75">
<path d="M11 29 L49 29 L69 30 L69 66 L49 67 L11 67Z" fill="#d3d3d3" stroke="#5a5d61" stroke-width="1"/>
<path d="M69 30 L78 31 L78 66 L69 66" fill="#dcdcdc" stroke="#5a5d61" stroke-width="1"/>
<rect x="72" y="37" width="3" height="15" fill="#a8b0bb"/>
<path d="M7 29 L26 8 L61 7.5 L81 33 L78 33 L69 30 L11 29.5Z" fill="#a6acb3" stroke="#5a5d61" stroke-width="1"/>
<path d="M61 7.5 L69 30" stroke="#5a5d61" stroke-width="0.8" fill="none"/>
</svg>
<svg class="a" style="left:205px;top:955px" width="60" height="60">
<text x="41" y="17.5" font-family="Liberation Sans" font-size="13" fill="#0000ff">Z</text>
<path d="M45 19.5 L40 29.5 H50Z M43 29 H47 V45 H43Z" fill="#0000ff"/>
<text x="6" y="54" font-family="Liberation Sans" font-size="13" fill="#ff0000">X</text>
<path d="M16 48.5 L29 43 V54Z" fill="#c80000"/>
<path d="M28 46.5 H38 V50.5 H28Z" fill="#ff0000"/>
<path d="M40 44 H49 V53 H40Z" fill="#d8d8d8" stroke="#666" stroke-width="1.2"/>
<circle cx="40.5" cy="48" r="5" fill="#00d000"/>
<path d="M32 40 L37 48 M37 48 L35 53 M38.5 40 L36 46" stroke="#00ff00" stroke-width="1"/>
</svg>
<svg class="a" style="left:200px;top:572px" width="20" height="34">
<path d="M1 1 A16 16 0 0 1 1 33Z" fill="#c0c6ce"/>
<path d="M10.5 12.5 L7 16.5 L10.5 20.5" fill="none" stroke="#fff" stroke-width="1.6"/>
</svg>
<svg class="a" style="left:590px;top:225px" width="110" height="60">
<path d="M10.5 50 L83 14.5" stroke="#e8141e" stroke-width="2.8" stroke-linecap="round"/>
<path d="M96 10 L79.5 11.5 L83 14.5 L84.5 22Z" fill="#e8141e"/>
</svg>
<!--/EXTRA-->
</body></html>
